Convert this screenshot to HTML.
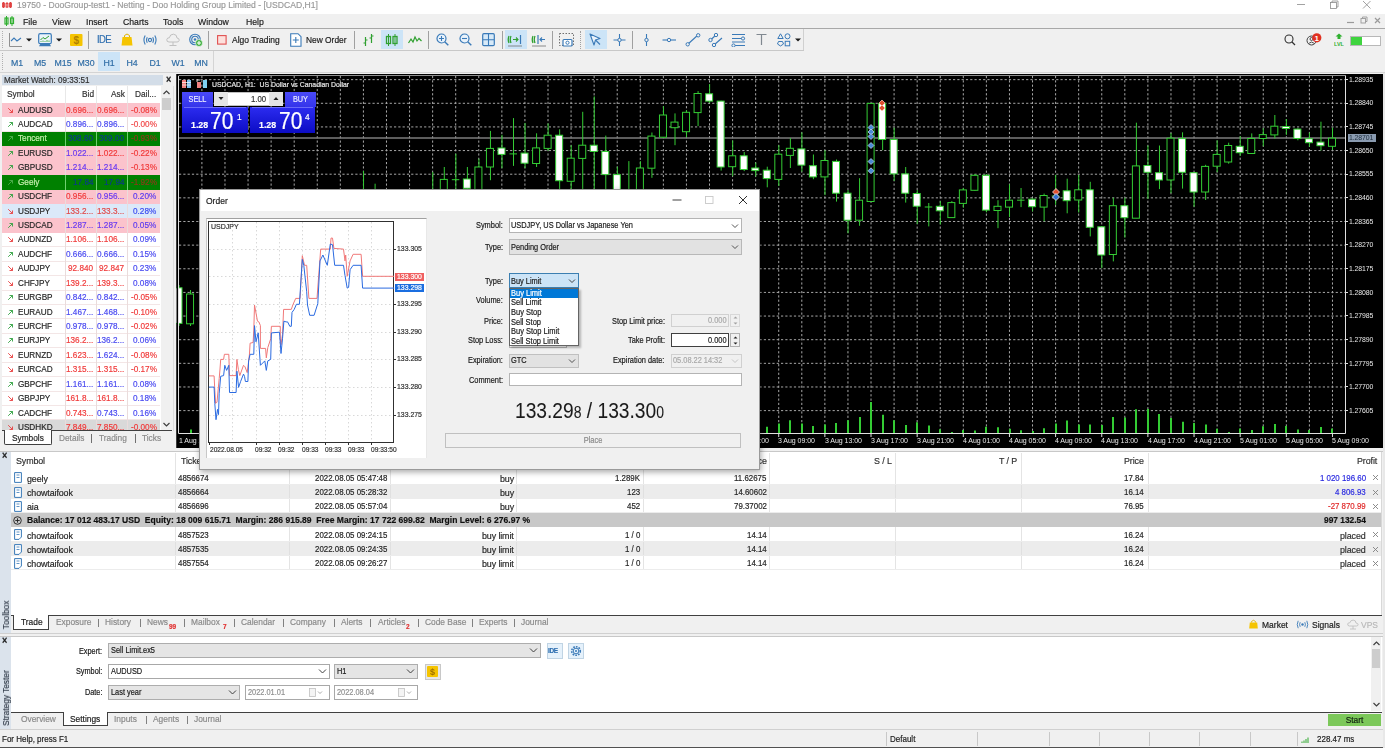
<!DOCTYPE html>
<html><head><meta charset="utf-8"><style>
*{margin:0;padding:0}
html,body{width:1385px;height:748px;overflow:hidden;background:#f0f0f0;position:relative}
body{font-family:"Liberation Sans",sans-serif}
.t8{position:absolute;white-space:nowrap;font-size:8px;-webkit-text-stroke:0.17px currentColor;transform:scaleY(1.12);will-change:transform}
.r{text-align:right}
.mw{font-size:8.2px;line-height:11px}
.tb{font-size:7.9px;line-height:11px}
.tbl{font-size:8.9px;line-height:11px;letter-spacing:-0.1px}
.pl{position:absolute;will-change:transform;left:1349px;font-size:6.9px;letter-spacing:-0.1px;line-height:10px;color:#e8e8e8;white-space:nowrap}
.tl{position:absolute;will-change:transform;top:435.5px;font-size:7px;letter-spacing:-0.05px;line-height:10px;color:#e8e8e8;white-space:nowrap}
.ar{position:absolute;left:0;top:0}
</style></head><body>
<div style="position:absolute;left:0;top:0;width:1385px;height:14px;background:#fff"></div>
<svg style="position:absolute;left:2px;top:1px" width="11" height="8" viewBox="0 0 11 8"><path d="M1.5 1V7M5 1V7M8.5 1V7" stroke="#e04040" stroke-width="1"/><rect x="0.5" y="2" width="2" height="4" fill="none" stroke="#e04040" stroke-width="0.9"/><rect x="4" y="2.5" width="2" height="3.5" fill="none" stroke="#e04040" stroke-width="0.9"/><rect x="7.5" y="2" width="2" height="4" fill="none" stroke="#e04040" stroke-width="0.9"/></svg>
<div class="t8" style="left:17px;top:-0.5px;line-height:11px;font-size:8.6px;color:#9a9a9a">19750 - DooGroup-test1 - Netting - Doo Holding Group Limited - [USDCAD,H1]</div>
<svg style="position:absolute;left:1296px;top:0px" width="10" height="8" viewBox="0 0 10 8"><path d="M1 4.5H9" stroke="#8a8a8a" stroke-width="0.8"/></svg>
<svg style="position:absolute;left:1329px;top:0px" width="10" height="9" viewBox="0 0 10 9"><rect x="1.5" y="2.5" width="6" height="6" fill="none" stroke="#8a8a8a" stroke-width="0.8"/><path d="M3 2.5V1H9V7H7.5" stroke="#8a8a8a" stroke-width="0.8" fill="none"/></svg>
<svg style="position:absolute;left:1362px;top:0px" width="10" height="9" viewBox="0 0 10 9"><path d="M1 1L8.5 8.5M8.5 1L1 8.5" stroke="#8a8a8a" stroke-width="0.8"/></svg>
<div style="position:absolute;left:0;top:14px;width:1385px;height:14px;background:#f0f0f0"></div>
<div style="position:absolute;left:0;top:28px;width:1385px;height:1px;background:#a8a8a8"></div>
<svg style="position:absolute;left:4px;top:15px" width="11" height="12" viewBox="0 0 11 12"><path d="M2.5 1V11M8 1V11" stroke="#30b030" stroke-width="1"/><rect x="1" y="3" width="3" height="6" fill="none" stroke="#30b030" stroke-width="1.2"/><rect x="6.5" y="3" width="3" height="5.5" fill="none" stroke="#30b030" stroke-width="1.2"/></svg>
<div class="t8" style="left:23px;top:15.6px;line-height:12px;font-size:8.7px;color:#1a1a1a">File</div>
<div class="t8" style="left:52px;top:15.6px;line-height:12px;font-size:8.7px;color:#1a1a1a">View</div>
<div class="t8" style="left:85.8px;top:15.6px;line-height:12px;font-size:8.7px;color:#1a1a1a">Insert</div>
<div class="t8" style="left:122.7px;top:15.6px;line-height:12px;font-size:8.7px;color:#1a1a1a">Charts</div>
<div class="t8" style="left:163.2px;top:15.6px;line-height:12px;font-size:8.7px;color:#1a1a1a">Tools</div>
<div class="t8" style="left:198.2px;top:15.6px;line-height:12px;font-size:8.7px;color:#1a1a1a">Window</div>
<div class="t8" style="left:245.9px;top:15.6px;line-height:12px;font-size:8.7px;color:#1a1a1a">Help</div>
<svg style="position:absolute;left:1346px;top:17px" width="9" height="7" viewBox="0 0 9 7"><path d="M1 5.5H8" stroke="#9a9a9a" stroke-width="1.2"/></svg>
<svg style="position:absolute;left:1360px;top:16px" width="8" height="8" viewBox="0 0 8 8"><rect x="1" y="2.5" width="4.5" height="4.5" fill="none" stroke="#9a9a9a" stroke-width="0.9"/><path d="M2.5 2.5V1H7V5.5H5.5" stroke="#9a9a9a" stroke-width="0.9" fill="none"/></svg>
<svg style="position:absolute;left:1374px;top:17px" width="7" height="7" viewBox="0 0 7 7"><path d="M1 1L6 6M6 1L1 6" stroke="#9a9a9a" stroke-width="1.2"/></svg>
<div style="position:absolute;left:0;top:29px;width:1385px;height:21px;background:#f0f0f0"></div>
<div style="position:absolute;left:0;top:50px;width:804px;height:1px;background:#c8c8c8"></div>
<div style="position:absolute;left:803px;top:29px;width:1px;height:21px;background:#d0d0d0"></div>
<div style="position:absolute;left:2px;top:31px;width:1px;height:17px;border-left:1px dotted #b0b0b0"></div>
<svg style="position:absolute;left:9px;top:33px" width="14" height="14" viewBox="0 0 14 14"><path d="M0.5 0V13.5H13" stroke="#909090" stroke-width="1" fill="none"/><path d="M2 8L5 5L8 8L12 5" stroke="#3a7ab8" stroke-width="1.1" fill="none"/></svg>
<svg style="position:absolute;left:26px;top:38px" width="6" height="4" viewBox="0 0 6 4"><path d="M0 0.5H6L3 3.5Z" fill="#1a1a1a"/></svg>
<svg style="position:absolute;left:38px;top:33px" width="14" height="14" viewBox="0 0 14 14"><rect x="0.7" y="0.7" width="12.6" height="10" rx="1.5" fill="#eaf3fb" stroke="#3a7ab8" stroke-width="1.2"/><path d="M2.5 10.5L1 13.3H13L11.5 10.5" fill="#3a7ab8"/><path d="M2.5 7L5 4.5L7 6L11 3" stroke="#30a030" stroke-width="1" fill="none"/><path d="M3 9V8M5 9V7.5M7 9V8M9 9V7M11 9V7.5" stroke="#30a030" stroke-width="0.8"/></svg>
<svg style="position:absolute;left:56px;top:38px" width="6" height="4" viewBox="0 0 6 4"><path d="M0 0.5H6L3 3.5Z" fill="#1a1a1a"/></svg>
<svg style="position:absolute;left:70px;top:34px" width="13" height="12" viewBox="0 0 13 12"><rect x="0" y="0" width="12.5" height="12" rx="1" fill="#f5c400"/><text x="6.2" y="9.6" font-family="Liberation Sans" font-size="10" font-weight="bold" fill="#b08000" text-anchor="middle">$</text></svg>
<div style="position:absolute;left:88px;top:31px;width:1px;height:18px;background:#a0a0a0"></div>
<div class="t8" style="left:96.5px;top:33px;line-height:14px;font-size:9.5px;color:#2f6fb0;letter-spacing:-0.6px">IDE</div>
<svg style="position:absolute;left:121px;top:33px" width="12" height="13" viewBox="0 0 12 13"><path d="M3.5 4V2.5Q6 -0.5 8.5 2.5V4" stroke="#e0b000" stroke-width="1" fill="none"/><path d="M1.5 4H10.5L11.5 12.5H0.5Z" fill="#f5c400"/></svg>
<svg style="position:absolute;left:143px;top:34px" width="14" height="12" viewBox="0 0 14 12"><circle cx="7" cy="6" r="1.6" fill="none" stroke="#3a7ab8" stroke-width="1.1"/><path d="M4.3 3.3Q2.8 6 4.3 8.7M9.7 3.3Q11.2 6 9.7 8.7M2.2 1.5Q-0.3 6 2.2 10.5M11.8 1.5Q14.3 6 11.8 10.5" stroke="#3a7ab8" stroke-width="1.1" fill="none"/></svg>
<svg style="position:absolute;left:166px;top:33px" width="14" height="13" viewBox="0 0 14 13"><path d="M3 9Q0.5 9 0.8 6.5Q1.3 4.5 3.3 4.8Q4 1 7.5 1.2Q11 1.5 11 5Q13.5 5.3 13.2 7.3Q13 9 11 9Z" fill="none" stroke="#c0c0c0" stroke-width="1"/><path d="M7 9V12.5M3.5 12.5H10.5" stroke="#c0c0c0" stroke-width="1"/></svg>
<svg style="position:absolute;left:189px;top:33px" width="14" height="14" viewBox="0 0 14 14"><circle cx="6" cy="6.5" r="5.3" fill="none" stroke="#3a7ab8" stroke-width="1.1"/><circle cx="6" cy="6.5" r="3.3" fill="none" stroke="#3a7ab8" stroke-width="1.1"/><circle cx="6" cy="6.5" r="1.3" fill="#3a7ab8"/><circle cx="10" cy="10" r="3.5" fill="#40b040" stroke="#fff" stroke-width="0.6"/><path d="M10 8V12M8 10H12" stroke="#fff" stroke-width="1.1"/></svg>
<div style="position:absolute;left:208px;top:31px;width:1px;height:18px;background:#a0a0a0"></div>
<svg style="position:absolute;left:217px;top:35px" width="10" height="10" viewBox="0 0 10 10"><rect x="0.6" y="0.6" width="8.5" height="8.5" fill="#fde0dc" stroke="#e05050" stroke-width="1.1"/></svg>
<div class="t8" style="left:231.5px;top:33px;line-height:14px;font-size:8.5px;color:#202020">Algo Trading</div>
<svg style="position:absolute;left:290px;top:33px" width="12" height="14" viewBox="0 0 12 14"><path d="M0.7 0.7H8L11 3.7V13.3H0.7Z" fill="#fff" stroke="#3a7ab8" stroke-width="1.1"/><path d="M5.8 4V10M2.8 7H8.8" stroke="#3a7ab8" stroke-width="1.1"/></svg>
<div class="t8" style="left:306px;top:33px;line-height:14px;font-size:8.4px;color:#202020">New Order</div>
<div style="position:absolute;left:354px;top:31px;width:1px;height:18px;background:#a0a0a0"></div>
<svg style="position:absolute;left:362px;top:33px" width="13" height="14" viewBox="0 0 13 14"><path d="M3.5 4V13M9.5 1V10M1.5 10H3.5M3.5 7H5.5M7.5 5H9.5M9.5 3H11.5" stroke="#30a030" stroke-width="1.2" fill="none"/></svg>
<div style="position:absolute;left:381px;top:30px;width:22px;height:19px;background:#cce4f7"></div>
<svg style="position:absolute;left:385px;top:33px" width="14" height="14" viewBox="0 0 14 14"><path d="M3.5 1V13M10 1V13" stroke="#30a030" stroke-width="1"/><rect x="1.5" y="3.5" width="4" height="7" fill="none" stroke="#30a030" stroke-width="1.3"/><rect x="8" y="3.5" width="4" height="7" fill="none" stroke="#30a030" stroke-width="1.3"/></svg>
<svg style="position:absolute;left:408px;top:35px" width="14" height="10" viewBox="0 0 14 10"><path d="M0.5 8L3 4L5 7L7 2L9 6L11 3.5L13.5 6" stroke="#30a030" stroke-width="1.2" fill="none"/></svg>
<div style="position:absolute;left:428px;top:31px;width:1px;height:18px;background:#a0a0a0"></div>
<svg style="position:absolute;left:436px;top:33px" width="13" height="14" viewBox="0 0 13 14"><circle cx="5.5" cy="5.5" r="4.5" fill="#eaf3fb" stroke="#3a7ab8" stroke-width="1.2"/><path d="M8.7 8.7L12.3 12.3" stroke="#3a7ab8" stroke-width="1.4"/><path d="M5.5 3V8M3 5.5H8" stroke="#3a7ab8" stroke-width="1.1"/></svg>
<svg style="position:absolute;left:459px;top:33px" width="13" height="14" viewBox="0 0 13 14"><circle cx="5.5" cy="5.5" r="4.5" fill="#eaf3fb" stroke="#3a7ab8" stroke-width="1.2"/><path d="M8.7 8.7L12.3 12.3" stroke="#3a7ab8" stroke-width="1.4"/><path d="M3 5.5H8" stroke="#3a7ab8" stroke-width="1.1"/></svg>
<svg style="position:absolute;left:482px;top:33px" width="13" height="14" viewBox="0 0 13 14"><rect x="0.7" y="0.7" width="11.6" height="12" rx="1.2" fill="#d8eaf8" stroke="#3a7ab8" stroke-width="1.2"/><path d="M6.5 1V13M1 6.8H12" stroke="#3a7ab8" stroke-width="1.1"/></svg>
<div style="position:absolute;left:502px;top:31px;width:1px;height:18px;background:#a0a0a0"></div>
<div style="position:absolute;left:505px;top:30px;width:22px;height:19px;background:#cce4f7"></div>
<svg style="position:absolute;left:507px;top:33px" width="17" height="14" viewBox="0 0 17 14"><path d="M2 3Q0.5 6.5 2 10M4 3Q2.5 6.5 4 10" stroke="#30a030" stroke-width="1.3" fill="none"/><path d="M6 6.5H11M9 4.5L11 6.5L9 8.5" stroke="#30a030" stroke-width="1.1" fill="none"/><path d="M13.5 2V11" stroke="#3a7ab8" stroke-width="1.2"/><path d="M1 13H15" stroke="#707070" stroke-width="0.8"/></svg>
<svg style="position:absolute;left:531px;top:33px" width="16" height="14" viewBox="0 0 16 14"><path d="M2 3Q0.5 6.5 2 10M4 3Q2.5 6.5 4 10" stroke="#30a030" stroke-width="1.3" fill="none"/><path d="M7 2V11" stroke="#3a7ab8" stroke-width="1.2"/><path d="M9 6.5H14M11 4.5L9 6.5L11 8.5" stroke="#3a7ab8" stroke-width="1.1" fill="none"/><path d="M1 13H15" stroke="#707070" stroke-width="0.8"/></svg>
<div style="position:absolute;left:552px;top:31px;width:1px;height:18px;background:#a0a0a0"></div>
<svg style="position:absolute;left:559px;top:33px" width="16" height="14" viewBox="0 0 16 14"><rect x="0.5" y="0.5" width="14" height="12" fill="none" stroke="#606060" stroke-width="0.9" stroke-dasharray="1.5 1.5"/><rect x="4" y="6.5" width="9" height="6.5" rx="1" fill="#fff" stroke="#3a7ab8" stroke-width="1.2"/><circle cx="8.5" cy="9.7" r="1.6" fill="none" stroke="#3a7ab8" stroke-width="1"/></svg>
<div style="position:absolute;left:580px;top:31px;width:1px;height:18px;border-left:1px dotted #a0a0a0"></div>
<div style="position:absolute;left:585px;top:30px;width:22px;height:19px;background:#cce4f7"></div>
<svg style="position:absolute;left:589px;top:33px" width="13" height="14" viewBox="0 0 13 14"><path d="M1 1L11 5.5L6.5 7L5 12Z" fill="#eaf3fb" stroke="#3a7ab8" stroke-width="1.1" stroke-linejoin="round"/><path d="M6.5 7L11 11.5" stroke="#3a7ab8" stroke-width="1.1"/></svg>
<svg style="position:absolute;left:613px;top:33px" width="13" height="14" viewBox="0 0 13 14"><path d="M6.5 1V13M0.5 7H12.5" stroke="#3a7ab8" stroke-width="1.1"/><circle cx="6.5" cy="7" r="1.7" fill="#f0f0f0" stroke="#3a7ab8" stroke-width="1"/></svg>
<div style="position:absolute;left:632px;top:31px;width:1px;height:18px;background:#a0a0a0"></div>
<svg style="position:absolute;left:642px;top:33px" width="9" height="14" viewBox="0 0 9 14"><path d="M4.5 1V13" stroke="#3a7ab8" stroke-width="1.1"/><circle cx="4.5" cy="7" r="1.7" fill="#f0f0f0" stroke="#3a7ab8" stroke-width="1"/></svg>
<svg style="position:absolute;left:662px;top:35px" width="15" height="10" viewBox="0 0 15 10"><path d="M0.5 5H14" stroke="#3a7ab8" stroke-width="1.1"/><circle cx="7" cy="5" r="1.7" fill="#f0f0f0" stroke="#3a7ab8" stroke-width="1"/></svg>
<svg style="position:absolute;left:685px;top:33px" width="16" height="14" viewBox="0 0 16 14"><path d="M3 11L13 2" stroke="#3a7ab8" stroke-width="1.1"/><circle cx="2.7" cy="11.3" r="1.7" fill="#f0f0f0" stroke="#3a7ab8" stroke-width="1"/><circle cx="13.2" cy="2.3" r="1.7" fill="#f0f0f0" stroke="#3a7ab8" stroke-width="1"/></svg>
<svg style="position:absolute;left:708px;top:33px" width="15" height="14" viewBox="0 0 15 14"><path d="M2.5 7L8 2M6 12L14 5" stroke="#3a7ab8" stroke-width="1.1"/><circle cx="2.5" cy="7" r="1.7" fill="#f0f0f0" stroke="#3a7ab8" stroke-width="1"/><circle cx="8" cy="2" r="1.7" fill="#f0f0f0" stroke="#3a7ab8" stroke-width="1"/><circle cx="6" cy="12" r="1.7" fill="#f0f0f0" stroke="#3a7ab8" stroke-width="1"/></svg>
<svg style="position:absolute;left:731px;top:33px" width="15" height="14" viewBox="0 0 15 14"><path d="M1 1.5H14M1 5.5H14M3 12.5H14M1 9H14" stroke="#3a7ab8" stroke-width="1.1"/><circle cx="12" cy="5.5" r="1.6" fill="#f0f0f0" stroke="#3a7ab8" stroke-width="1"/><circle cx="2.5" cy="12.5" r="1.6" fill="#f0f0f0" stroke="#3a7ab8" stroke-width="1"/></svg>
<svg style="position:absolute;left:756px;top:33px" width="11" height="14" viewBox="0 0 11 14"><path d="M0.5 1.5H10.5M5.5 1.5V12" stroke="#808890" stroke-width="1.2"/></svg>
<svg style="position:absolute;left:777px;top:33px" width="14" height="14" viewBox="0 0 14 14"><path d="M3.5 0.8L6.2 5.5H0.8Z" fill="none" stroke="#3a7ab8" stroke-width="1"/><circle cx="10.5" cy="3.3" r="2.5" fill="none" stroke="#3a7ab8" stroke-width="1"/><path d="M1.5 8.5H5.5L6.5 11L3.5 13L0.5 11Z" fill="none" stroke="#3a7ab8" stroke-width="1"/><rect x="8.2" y="8.3" width="4.5" height="4.5" fill="none" stroke="#3a7ab8" stroke-width="1"/></svg>
<svg style="position:absolute;left:795px;top:38px" width="6" height="4" viewBox="0 0 6 4"><path d="M0 0.5H6L3 3.5Z" fill="#1a1a1a"/></svg>
<svg style="position:absolute;left:1284px;top:34px" width="12" height="12" viewBox="0 0 12 12"><circle cx="5" cy="5" r="4" fill="none" stroke="#303030" stroke-width="1.1"/><path d="M8 8L11 11" stroke="#303030" stroke-width="1.3"/></svg>
<svg style="position:absolute;left:1306px;top:33px" width="16" height="13" viewBox="0 0 16 13"><circle cx="5.5" cy="7.5" r="4.5" fill="none" stroke="#404040" stroke-width="1"/><circle cx="5.5" cy="6" r="1.5" fill="none" stroke="#404040" stroke-width="0.9"/><path d="M2.5 10.5Q5.5 7.5 8.5 10.5" stroke="#404040" stroke-width="0.9" fill="none"/><circle cx="10.8" cy="4.8" r="4.6" fill="#e03020"/><text x="10.8" y="8.3" font-family="Liberation Sans" font-size="8" font-weight="bold" fill="#fff" text-anchor="middle">1</text></svg>
<svg style="position:absolute;left:1334px;top:33px" width="10" height="13" viewBox="0 0 10 13"><path d="M5 0.5L8.5 3.5H6.5V6H3.5V3.5H1.5Z" fill="#30b030"/><text x="5" y="12.5" font-family="Liberation Sans" font-size="5.5" font-weight="bold" fill="#30b030" text-anchor="middle">LVL</text></svg>
<div style="position:absolute;left:1350px;top:36px;width:29px;height:8px;border:1px solid #b8b8b8;background:#fff"></div>
<div style="position:absolute;left:1351px;top:37px;width:11px;height:8px;background:#3fd43f"></div>
<div style="position:absolute;left:0;top:51px;width:1385px;height:21px;background:#f0f0f0"></div>
<div style="position:absolute;left:2px;top:53px;width:1px;height:17px;border-left:1px dotted #b0b0b0"></div>
<div style="position:absolute;left:213px;top:51px;width:1px;height:21px;background:#d4d4d4"></div>
<div style="position:absolute;left:0;top:72px;width:1385px;height:1px;background:#d4d4d4"></div>
<div style="position:absolute;left:98px;top:52px;width:22px;height:19px;background:#cce4f7;border:0px"></div>
<div class="t8" style="left:4.5px;width:24px;text-align:center;top:56.5px;line-height:13px;font-size:8.8px;color:#2e6ca5">M1</div>
<div class="t8" style="left:28px;width:24px;text-align:center;top:56.5px;line-height:13px;font-size:8.8px;color:#2e6ca5">M5</div>
<div class="t8" style="left:51px;width:24px;text-align:center;top:56.5px;line-height:13px;font-size:8.8px;color:#2e6ca5">M15</div>
<div class="t8" style="left:74.3px;width:24px;text-align:center;top:56.5px;line-height:13px;font-size:8.8px;color:#2e6ca5">M30</div>
<div class="t8" style="left:97.3px;width:24px;text-align:center;top:56.5px;line-height:13px;font-size:8.8px;color:#2e6ca5">H1</div>
<div class="t8" style="left:120.30000000000001px;width:24px;text-align:center;top:56.5px;line-height:13px;font-size:8.8px;color:#2e6ca5">H4</div>
<div class="t8" style="left:143.3px;width:24px;text-align:center;top:56.5px;line-height:13px;font-size:8.8px;color:#2e6ca5">D1</div>
<div class="t8" style="left:166.3px;width:24px;text-align:center;top:56.5px;line-height:13px;font-size:8.8px;color:#2e6ca5">W1</div>
<div class="t8" style="left:189.3px;width:24px;text-align:center;top:56.5px;line-height:13px;font-size:8.8px;color:#2e6ca5">MN</div>
<div style="position:absolute;left:0;top:73px;width:175px;height:376px;background:#f0f0f0"></div>
<div style="position:absolute;left:2px;top:75px;width:161px;height:10px;background:#d3dde8"></div>
<div class="t8" style="left:4px;top:75px;line-height:12px;color:#303030;font-size:8.1px">Market Watch: 09:33:51</div>
<div class="t8" style="left:166px;top:74px;line-height:12px;font-size:9px;font-weight:bold;color:#202020">×</div>
<div style="position:absolute;left:2px;top:86px;width:159px;height:345px;background:#fff"></div>
<div class="t8" style="left:7px;top:89px;line-height:11px;color:#303030;font-size:8.3px">Symbol</div>
<div class="t8 r" style="right:calc(1385px - 93.5px);top:89px;line-height:11px;color:#303030;font-size:8.3px">Bid</div>
<div class="t8 r" style="right:calc(1385px - 124.5px);top:89px;line-height:11px;color:#303030;font-size:8.3px">Ask</div>
<div class="t8 r" style="right:calc(1385px - 156.5px);top:89px;line-height:11px;color:#303030;font-size:8.3px">Dail...</div>
<div style="position:absolute;left:65px;top:86px;width:1px;height:17px;background:#e8e8e8"></div>
<div style="position:absolute;left:96px;top:86px;width:1px;height:17px;background:#e8e8e8"></div>
<div style="position:absolute;left:127px;top:86px;width:1px;height:17px;background:#e8e8e8"></div>
<div style="position:absolute;left:2px;top:103.00px;width:158px;height:14.43px;background:#fbc3cc"></div>
<div style="position:absolute;left:65px;top:103.00px;width:1px;height:14.43px;background:#eadcdc"></div>
<div style="position:absolute;left:96px;top:103.00px;width:1px;height:14.43px;background:#eadcdc"></div>
<div style="position:absolute;left:127px;top:103.00px;width:1px;height:14.43px;background:#eadcdc"></div>
<div style="position:absolute;left:7px;top:106.50px"><svg class="ar" width="7" height="7" viewBox="0 0 7 7"><path d="M1.2 1.2L5.5 5.5M2.5 5.5H5.5V2.5" stroke="#e84040" stroke-width="0.9" fill="none"/></svg></div>
<div class="t8 mw" style="left:18px;top:104.60px;color:#262626">AUDUSD</div>
<div class="t8 mw r" style="right:calc(1385px - 93.5px);top:104.60px;color:#f03a3a">0.696...</div>
<div class="t8 mw r" style="right:calc(1385px - 124.5px);top:104.60px;color:#f03a3a">0.696...</div>
<div class="t8 mw r" style="right:calc(1385px - 156.5px);top:104.60px;color:#f03a3a">-0.08%</div>
<div style="position:absolute;left:2px;top:117.43px;width:158px;height:14.43px;background:#ffffff"></div>
<div style="position:absolute;left:2px;top:130.86px;width:158px;height:1px;background:#f3e6e6"></div>
<div style="position:absolute;left:65px;top:117.43px;width:1px;height:14.43px;background:#eadcdc"></div>
<div style="position:absolute;left:96px;top:117.43px;width:1px;height:14.43px;background:#eadcdc"></div>
<div style="position:absolute;left:127px;top:117.43px;width:1px;height:14.43px;background:#eadcdc"></div>
<div style="position:absolute;left:7px;top:120.93px"><svg class="ar" width="7" height="7" viewBox="0 0 7 7"><path d="M1.2 5.8L5.5 1.5M2.5 1.5H5.5V4.5" stroke="#30a040" stroke-width="0.9" fill="none"/></svg></div>
<div class="t8 mw" style="left:18px;top:119.03px;color:#262626">AUDCAD</div>
<div class="t8 mw r" style="right:calc(1385px - 93.5px);top:119.03px;color:#4a4af0">0.896...</div>
<div class="t8 mw r" style="right:calc(1385px - 124.5px);top:119.03px;color:#4a4af0">0.896...</div>
<div class="t8 mw r" style="right:calc(1385px - 156.5px);top:119.03px;color:#f04848">-0.00%</div>
<div style="position:absolute;left:2px;top:131.86px;width:158px;height:14.43px;background:#008000"></div>
<div style="position:absolute;left:65px;top:131.86px;width:1px;height:14.43px;background:#70d070"></div>
<div style="position:absolute;left:96px;top:131.86px;width:1px;height:14.43px;background:#70d070"></div>
<div style="position:absolute;left:127px;top:131.86px;width:1px;height:14.43px;background:#70d070"></div>
<div style="position:absolute;left:7px;top:135.36px"><svg class="ar" width="7" height="7" viewBox="0 0 7 7"><path d="M1.2 5.8L5.5 1.5M2.5 1.5H5.5V4.5" stroke="#50b050" stroke-width="0.9" fill="none"/></svg></div>
<div class="t8 mw" style="left:18px;top:133.46px;color:#c8f0b0">Tencent</div>
<div class="t8 mw r" style="right:calc(1385px - 93.5px);top:133.46px;color:#0a3a8a">308.60</div>
<div class="t8 mw r" style="right:calc(1385px - 124.5px);top:133.46px;color:#0a3a8a">309.00</div>
<div class="t8 mw r" style="right:calc(1385px - 156.5px);top:133.46px;color:#8a3a1a">-0.93%</div>
<div style="position:absolute;left:2px;top:146.29px;width:158px;height:14.43px;background:#fbc3cc"></div>
<div style="position:absolute;left:65px;top:146.29px;width:1px;height:14.43px;background:#eadcdc"></div>
<div style="position:absolute;left:96px;top:146.29px;width:1px;height:14.43px;background:#eadcdc"></div>
<div style="position:absolute;left:127px;top:146.29px;width:1px;height:14.43px;background:#eadcdc"></div>
<div style="position:absolute;left:7px;top:149.79px"><svg class="ar" width="7" height="7" viewBox="0 0 7 7"><path d="M1.2 5.8L5.5 1.5M2.5 1.5H5.5V4.5" stroke="#30a040" stroke-width="0.9" fill="none"/></svg></div>
<div class="t8 mw" style="left:18px;top:147.89px;color:#262626">EURUSD</div>
<div class="t8 mw r" style="right:calc(1385px - 93.5px);top:147.89px;color:#6a3af0">1.022...</div>
<div class="t8 mw r" style="right:calc(1385px - 124.5px);top:147.89px;color:#f03a3a">1.022...</div>
<div class="t8 mw r" style="right:calc(1385px - 156.5px);top:147.89px;color:#f03a3a">-0.22%</div>
<div style="position:absolute;left:2px;top:160.72px;width:158px;height:14.43px;background:#fbc3cc"></div>
<div style="position:absolute;left:65px;top:160.72px;width:1px;height:14.43px;background:#eadcdc"></div>
<div style="position:absolute;left:96px;top:160.72px;width:1px;height:14.43px;background:#eadcdc"></div>
<div style="position:absolute;left:127px;top:160.72px;width:1px;height:14.43px;background:#eadcdc"></div>
<div style="position:absolute;left:7px;top:164.22px"><svg class="ar" width="7" height="7" viewBox="0 0 7 7"><path d="M1.2 5.8L5.5 1.5M2.5 1.5H5.5V4.5" stroke="#30a040" stroke-width="0.9" fill="none"/></svg></div>
<div class="t8 mw" style="left:18px;top:162.32px;color:#262626">GBPUSD</div>
<div class="t8 mw r" style="right:calc(1385px - 93.5px);top:162.32px;color:#6a3af0">1.214...</div>
<div class="t8 mw r" style="right:calc(1385px - 124.5px);top:162.32px;color:#6a3af0">1.214...</div>
<div class="t8 mw r" style="right:calc(1385px - 156.5px);top:162.32px;color:#f03a3a">-0.13%</div>
<div style="position:absolute;left:2px;top:175.15px;width:158px;height:14.43px;background:#008000"></div>
<div style="position:absolute;left:65px;top:175.15px;width:1px;height:14.43px;background:#70d070"></div>
<div style="position:absolute;left:96px;top:175.15px;width:1px;height:14.43px;background:#70d070"></div>
<div style="position:absolute;left:127px;top:175.15px;width:1px;height:14.43px;background:#70d070"></div>
<div style="position:absolute;left:7px;top:178.65px"><svg class="ar" width="7" height="7" viewBox="0 0 7 7"><path d="M1.2 5.8L5.5 1.5M2.5 1.5H5.5V4.5" stroke="#50b050" stroke-width="0.9" fill="none"/></svg></div>
<div class="t8 mw" style="left:18px;top:176.75px;color:#c8f0b0">Geely</div>
<div class="t8 mw r" style="right:calc(1385px - 93.5px);top:176.75px;color:#0a3a8a">17.84</div>
<div class="t8 mw r" style="right:calc(1385px - 124.5px);top:176.75px;color:#0a3a8a">17.94</div>
<div class="t8 mw r" style="right:calc(1385px - 156.5px);top:176.75px;color:#8a3a1a">-1.92%</div>
<div style="position:absolute;left:2px;top:189.58px;width:158px;height:14.43px;background:#fbc3cc"></div>
<div style="position:absolute;left:65px;top:189.58px;width:1px;height:14.43px;background:#eadcdc"></div>
<div style="position:absolute;left:96px;top:189.58px;width:1px;height:14.43px;background:#eadcdc"></div>
<div style="position:absolute;left:127px;top:189.58px;width:1px;height:14.43px;background:#eadcdc"></div>
<div style="position:absolute;left:7px;top:193.08px"><svg class="ar" width="7" height="7" viewBox="0 0 7 7"><path d="M1.2 5.8L5.5 1.5M2.5 1.5H5.5V4.5" stroke="#30a040" stroke-width="0.9" fill="none"/></svg></div>
<div class="t8 mw" style="left:18px;top:191.18px;color:#262626">USDCHF</div>
<div class="t8 mw r" style="right:calc(1385px - 93.5px);top:191.18px;color:#f03a3a">0.956...</div>
<div class="t8 mw r" style="right:calc(1385px - 124.5px);top:191.18px;color:#6a3af0">0.956...</div>
<div class="t8 mw r" style="right:calc(1385px - 156.5px);top:191.18px;color:#5a3af0">0.20%</div>
<div style="position:absolute;left:2px;top:204.01px;width:158px;height:14.43px;background:#dbe9f9"></div>
<div style="position:absolute;left:65px;top:204.01px;width:1px;height:14.43px;background:#eadcdc"></div>
<div style="position:absolute;left:96px;top:204.01px;width:1px;height:14.43px;background:#eadcdc"></div>
<div style="position:absolute;left:127px;top:204.01px;width:1px;height:14.43px;background:#eadcdc"></div>
<div style="position:absolute;left:7px;top:207.51px"><svg class="ar" width="7" height="7" viewBox="0 0 7 7"><path d="M1.2 1.2L5.5 5.5M2.5 5.5H5.5V2.5" stroke="#e84040" stroke-width="0.9" fill="none"/></svg></div>
<div class="t8 mw" style="left:18px;top:205.61px;color:#262626">USDJPY</div>
<div class="t8 mw r" style="right:calc(1385px - 93.5px);top:205.61px;color:#e04848">133.2...</div>
<div class="t8 mw r" style="right:calc(1385px - 124.5px);top:205.61px;color:#e04848">133.3...</div>
<div class="t8 mw r" style="right:calc(1385px - 156.5px);top:205.61px;color:#3a4af0">0.28%</div>
<div style="position:absolute;left:2px;top:218.44px;width:158px;height:14.43px;background:#fbc3cc"></div>
<div style="position:absolute;left:65px;top:218.44px;width:1px;height:14.43px;background:#eadcdc"></div>
<div style="position:absolute;left:96px;top:218.44px;width:1px;height:14.43px;background:#eadcdc"></div>
<div style="position:absolute;left:127px;top:218.44px;width:1px;height:14.43px;background:#eadcdc"></div>
<div style="position:absolute;left:7px;top:221.94px"><svg class="ar" width="7" height="7" viewBox="0 0 7 7"><path d="M1.2 5.8L5.5 1.5M2.5 1.5H5.5V4.5" stroke="#30a040" stroke-width="0.9" fill="none"/></svg></div>
<div class="t8 mw" style="left:18px;top:220.04px;color:#262626">USDCAD</div>
<div class="t8 mw r" style="right:calc(1385px - 93.5px);top:220.04px;color:#6a3af0">1.287...</div>
<div class="t8 mw r" style="right:calc(1385px - 124.5px);top:220.04px;color:#6a3af0">1.287...</div>
<div class="t8 mw r" style="right:calc(1385px - 156.5px);top:220.04px;color:#5a3af0">0.05%</div>
<div style="position:absolute;left:2px;top:232.87px;width:158px;height:14.43px;background:#ffffff"></div>
<div style="position:absolute;left:2px;top:246.30px;width:158px;height:1px;background:#f3e6e6"></div>
<div style="position:absolute;left:65px;top:232.87px;width:1px;height:14.43px;background:#eadcdc"></div>
<div style="position:absolute;left:96px;top:232.87px;width:1px;height:14.43px;background:#eadcdc"></div>
<div style="position:absolute;left:127px;top:232.87px;width:1px;height:14.43px;background:#eadcdc"></div>
<div style="position:absolute;left:7px;top:236.37px"><svg class="ar" width="7" height="7" viewBox="0 0 7 7"><path d="M1.2 1.2L5.5 5.5M2.5 5.5H5.5V2.5" stroke="#e84040" stroke-width="0.9" fill="none"/></svg></div>
<div class="t8 mw" style="left:18px;top:234.47px;color:#262626">AUDNZD</div>
<div class="t8 mw r" style="right:calc(1385px - 93.5px);top:234.47px;color:#f03a3a">1.106...</div>
<div class="t8 mw r" style="right:calc(1385px - 124.5px);top:234.47px;color:#f03a3a">1.106...</div>
<div class="t8 mw r" style="right:calc(1385px - 156.5px);top:234.47px;color:#4a4af0">0.09%</div>
<div style="position:absolute;left:2px;top:247.30px;width:158px;height:14.43px;background:#ffffff"></div>
<div style="position:absolute;left:2px;top:260.73px;width:158px;height:1px;background:#f3e6e6"></div>
<div style="position:absolute;left:65px;top:247.30px;width:1px;height:14.43px;background:#eadcdc"></div>
<div style="position:absolute;left:96px;top:247.30px;width:1px;height:14.43px;background:#eadcdc"></div>
<div style="position:absolute;left:127px;top:247.30px;width:1px;height:14.43px;background:#eadcdc"></div>
<div style="position:absolute;left:7px;top:250.80px"><svg class="ar" width="7" height="7" viewBox="0 0 7 7"><path d="M1.2 5.8L5.5 1.5M2.5 1.5H5.5V4.5" stroke="#30a040" stroke-width="0.9" fill="none"/></svg></div>
<div class="t8 mw" style="left:18px;top:248.90px;color:#262626">AUDCHF</div>
<div class="t8 mw r" style="right:calc(1385px - 93.5px);top:248.90px;color:#4a4af0">0.666...</div>
<div class="t8 mw r" style="right:calc(1385px - 124.5px);top:248.90px;color:#4a4af0">0.666...</div>
<div class="t8 mw r" style="right:calc(1385px - 156.5px);top:248.90px;color:#4a4af0">0.15%</div>
<div style="position:absolute;left:2px;top:261.73px;width:158px;height:14.43px;background:#ffffff"></div>
<div style="position:absolute;left:2px;top:275.16px;width:158px;height:1px;background:#f3e6e6"></div>
<div style="position:absolute;left:65px;top:261.73px;width:1px;height:14.43px;background:#eadcdc"></div>
<div style="position:absolute;left:96px;top:261.73px;width:1px;height:14.43px;background:#eadcdc"></div>
<div style="position:absolute;left:127px;top:261.73px;width:1px;height:14.43px;background:#eadcdc"></div>
<div style="position:absolute;left:7px;top:265.23px"><svg class="ar" width="7" height="7" viewBox="0 0 7 7"><path d="M1.2 1.2L5.5 5.5M2.5 5.5H5.5V2.5" stroke="#e84040" stroke-width="0.9" fill="none"/></svg></div>
<div class="t8 mw" style="left:18px;top:263.33px;color:#262626">AUDJPY</div>
<div class="t8 mw r" style="right:calc(1385px - 93.5px);top:263.33px;color:#f03a3a">92.840</div>
<div class="t8 mw r" style="right:calc(1385px - 124.5px);top:263.33px;color:#f03a3a">92.847</div>
<div class="t8 mw r" style="right:calc(1385px - 156.5px);top:263.33px;color:#4a4af0">0.23%</div>
<div style="position:absolute;left:2px;top:276.16px;width:158px;height:14.43px;background:#ffffff"></div>
<div style="position:absolute;left:2px;top:289.59px;width:158px;height:1px;background:#f3e6e6"></div>
<div style="position:absolute;left:65px;top:276.16px;width:1px;height:14.43px;background:#eadcdc"></div>
<div style="position:absolute;left:96px;top:276.16px;width:1px;height:14.43px;background:#eadcdc"></div>
<div style="position:absolute;left:127px;top:276.16px;width:1px;height:14.43px;background:#eadcdc"></div>
<div style="position:absolute;left:7px;top:279.66px"><svg class="ar" width="7" height="7" viewBox="0 0 7 7"><path d="M1.2 1.2L5.5 5.5M2.5 5.5H5.5V2.5" stroke="#e84040" stroke-width="0.9" fill="none"/></svg></div>
<div class="t8 mw" style="left:18px;top:277.76px;color:#262626">CHFJPY</div>
<div class="t8 mw r" style="right:calc(1385px - 93.5px);top:277.76px;color:#f03a3a">139.2...</div>
<div class="t8 mw r" style="right:calc(1385px - 124.5px);top:277.76px;color:#f03a3a">139.3...</div>
<div class="t8 mw r" style="right:calc(1385px - 156.5px);top:277.76px;color:#4a4af0">0.08%</div>
<div style="position:absolute;left:2px;top:290.59px;width:158px;height:14.43px;background:#ffffff"></div>
<div style="position:absolute;left:2px;top:304.02px;width:158px;height:1px;background:#f3e6e6"></div>
<div style="position:absolute;left:65px;top:290.59px;width:1px;height:14.43px;background:#eadcdc"></div>
<div style="position:absolute;left:96px;top:290.59px;width:1px;height:14.43px;background:#eadcdc"></div>
<div style="position:absolute;left:127px;top:290.59px;width:1px;height:14.43px;background:#eadcdc"></div>
<div style="position:absolute;left:7px;top:294.09px"><svg class="ar" width="7" height="7" viewBox="0 0 7 7"><path d="M1.2 5.8L5.5 1.5M2.5 1.5H5.5V4.5" stroke="#30a040" stroke-width="0.9" fill="none"/></svg></div>
<div class="t8 mw" style="left:18px;top:292.19px;color:#262626">EURGBP</div>
<div class="t8 mw r" style="right:calc(1385px - 93.5px);top:292.19px;color:#4a4af0">0.842...</div>
<div class="t8 mw r" style="right:calc(1385px - 124.5px);top:292.19px;color:#4a4af0">0.842...</div>
<div class="t8 mw r" style="right:calc(1385px - 156.5px);top:292.19px;color:#f03a3a">-0.05%</div>
<div style="position:absolute;left:2px;top:305.02px;width:158px;height:14.43px;background:#ffffff"></div>
<div style="position:absolute;left:2px;top:318.45px;width:158px;height:1px;background:#f3e6e6"></div>
<div style="position:absolute;left:65px;top:305.02px;width:1px;height:14.43px;background:#eadcdc"></div>
<div style="position:absolute;left:96px;top:305.02px;width:1px;height:14.43px;background:#eadcdc"></div>
<div style="position:absolute;left:127px;top:305.02px;width:1px;height:14.43px;background:#eadcdc"></div>
<div style="position:absolute;left:7px;top:308.52px"><svg class="ar" width="7" height="7" viewBox="0 0 7 7"><path d="M1.2 5.8L5.5 1.5M2.5 1.5H5.5V4.5" stroke="#30a040" stroke-width="0.9" fill="none"/></svg></div>
<div class="t8 mw" style="left:18px;top:306.62px;color:#262626">EURAUD</div>
<div class="t8 mw r" style="right:calc(1385px - 93.5px);top:306.62px;color:#4a4af0">1.467...</div>
<div class="t8 mw r" style="right:calc(1385px - 124.5px);top:306.62px;color:#4a4af0">1.468...</div>
<div class="t8 mw r" style="right:calc(1385px - 156.5px);top:306.62px;color:#f03a3a">-0.10%</div>
<div style="position:absolute;left:2px;top:319.45px;width:158px;height:14.43px;background:#ffffff"></div>
<div style="position:absolute;left:2px;top:332.88px;width:158px;height:1px;background:#f3e6e6"></div>
<div style="position:absolute;left:65px;top:319.45px;width:1px;height:14.43px;background:#eadcdc"></div>
<div style="position:absolute;left:96px;top:319.45px;width:1px;height:14.43px;background:#eadcdc"></div>
<div style="position:absolute;left:127px;top:319.45px;width:1px;height:14.43px;background:#eadcdc"></div>
<div style="position:absolute;left:7px;top:322.95px"><svg class="ar" width="7" height="7" viewBox="0 0 7 7"><path d="M1.2 5.8L5.5 1.5M2.5 1.5H5.5V4.5" stroke="#30a040" stroke-width="0.9" fill="none"/></svg></div>
<div class="t8 mw" style="left:18px;top:321.05px;color:#262626">EURCHF</div>
<div class="t8 mw r" style="right:calc(1385px - 93.5px);top:321.05px;color:#4a4af0">0.978...</div>
<div class="t8 mw r" style="right:calc(1385px - 124.5px);top:321.05px;color:#4a4af0">0.978...</div>
<div class="t8 mw r" style="right:calc(1385px - 156.5px);top:321.05px;color:#f03a3a">-0.02%</div>
<div style="position:absolute;left:2px;top:333.88px;width:158px;height:14.43px;background:#ffffff"></div>
<div style="position:absolute;left:2px;top:347.31px;width:158px;height:1px;background:#f3e6e6"></div>
<div style="position:absolute;left:65px;top:333.88px;width:1px;height:14.43px;background:#eadcdc"></div>
<div style="position:absolute;left:96px;top:333.88px;width:1px;height:14.43px;background:#eadcdc"></div>
<div style="position:absolute;left:127px;top:333.88px;width:1px;height:14.43px;background:#eadcdc"></div>
<div style="position:absolute;left:7px;top:337.38px"><svg class="ar" width="7" height="7" viewBox="0 0 7 7"><path d="M1.2 5.8L5.5 1.5M2.5 1.5H5.5V4.5" stroke="#30a040" stroke-width="0.9" fill="none"/></svg></div>
<div class="t8 mw" style="left:18px;top:335.48px;color:#262626">EURJPY</div>
<div class="t8 mw r" style="right:calc(1385px - 93.5px);top:335.48px;color:#f03a3a">136.2...</div>
<div class="t8 mw r" style="right:calc(1385px - 124.5px);top:335.48px;color:#4a4af0">136.2...</div>
<div class="t8 mw r" style="right:calc(1385px - 156.5px);top:335.48px;color:#4a4af0">0.06%</div>
<div style="position:absolute;left:2px;top:348.31px;width:158px;height:14.43px;background:#ffffff"></div>
<div style="position:absolute;left:2px;top:361.74px;width:158px;height:1px;background:#f3e6e6"></div>
<div style="position:absolute;left:65px;top:348.31px;width:1px;height:14.43px;background:#eadcdc"></div>
<div style="position:absolute;left:96px;top:348.31px;width:1px;height:14.43px;background:#eadcdc"></div>
<div style="position:absolute;left:127px;top:348.31px;width:1px;height:14.43px;background:#eadcdc"></div>
<div style="position:absolute;left:7px;top:351.81px"><svg class="ar" width="7" height="7" viewBox="0 0 7 7"><path d="M1.2 1.2L5.5 5.5M2.5 5.5H5.5V2.5" stroke="#e84040" stroke-width="0.9" fill="none"/></svg></div>
<div class="t8 mw" style="left:18px;top:349.91px;color:#262626">EURNZD</div>
<div class="t8 mw r" style="right:calc(1385px - 93.5px);top:349.91px;color:#f03a3a">1.623...</div>
<div class="t8 mw r" style="right:calc(1385px - 124.5px);top:349.91px;color:#4a4af0">1.624...</div>
<div class="t8 mw r" style="right:calc(1385px - 156.5px);top:349.91px;color:#f03a3a">-0.08%</div>
<div style="position:absolute;left:2px;top:362.74px;width:158px;height:14.43px;background:#ffffff"></div>
<div style="position:absolute;left:2px;top:376.17px;width:158px;height:1px;background:#f3e6e6"></div>
<div style="position:absolute;left:65px;top:362.74px;width:1px;height:14.43px;background:#eadcdc"></div>
<div style="position:absolute;left:96px;top:362.74px;width:1px;height:14.43px;background:#eadcdc"></div>
<div style="position:absolute;left:127px;top:362.74px;width:1px;height:14.43px;background:#eadcdc"></div>
<div style="position:absolute;left:7px;top:366.24px"><svg class="ar" width="7" height="7" viewBox="0 0 7 7"><path d="M1.2 1.2L5.5 5.5M2.5 5.5H5.5V2.5" stroke="#e84040" stroke-width="0.9" fill="none"/></svg></div>
<div class="t8 mw" style="left:18px;top:364.34px;color:#262626">EURCAD</div>
<div class="t8 mw r" style="right:calc(1385px - 93.5px);top:364.34px;color:#f03a3a">1.315...</div>
<div class="t8 mw r" style="right:calc(1385px - 124.5px);top:364.34px;color:#f03a3a">1.315...</div>
<div class="t8 mw r" style="right:calc(1385px - 156.5px);top:364.34px;color:#f03a3a">-0.17%</div>
<div style="position:absolute;left:2px;top:377.17px;width:158px;height:14.43px;background:#ffffff"></div>
<div style="position:absolute;left:2px;top:390.60px;width:158px;height:1px;background:#f3e6e6"></div>
<div style="position:absolute;left:65px;top:377.17px;width:1px;height:14.43px;background:#eadcdc"></div>
<div style="position:absolute;left:96px;top:377.17px;width:1px;height:14.43px;background:#eadcdc"></div>
<div style="position:absolute;left:127px;top:377.17px;width:1px;height:14.43px;background:#eadcdc"></div>
<div style="position:absolute;left:7px;top:380.67px"><svg class="ar" width="7" height="7" viewBox="0 0 7 7"><path d="M1.2 5.8L5.5 1.5M2.5 1.5H5.5V4.5" stroke="#30a040" stroke-width="0.9" fill="none"/></svg></div>
<div class="t8 mw" style="left:18px;top:378.77px;color:#262626">GBPCHF</div>
<div class="t8 mw r" style="right:calc(1385px - 93.5px);top:378.77px;color:#4a4af0">1.161...</div>
<div class="t8 mw r" style="right:calc(1385px - 124.5px);top:378.77px;color:#4a4af0">1.161...</div>
<div class="t8 mw r" style="right:calc(1385px - 156.5px);top:378.77px;color:#4a4af0">0.08%</div>
<div style="position:absolute;left:2px;top:391.60px;width:158px;height:14.43px;background:#ffffff"></div>
<div style="position:absolute;left:2px;top:405.03px;width:158px;height:1px;background:#f3e6e6"></div>
<div style="position:absolute;left:65px;top:391.60px;width:1px;height:14.43px;background:#eadcdc"></div>
<div style="position:absolute;left:96px;top:391.60px;width:1px;height:14.43px;background:#eadcdc"></div>
<div style="position:absolute;left:127px;top:391.60px;width:1px;height:14.43px;background:#eadcdc"></div>
<div style="position:absolute;left:7px;top:395.10px"><svg class="ar" width="7" height="7" viewBox="0 0 7 7"><path d="M1.2 1.2L5.5 5.5M2.5 5.5H5.5V2.5" stroke="#e84040" stroke-width="0.9" fill="none"/></svg></div>
<div class="t8 mw" style="left:18px;top:393.20px;color:#262626">GBPJPY</div>
<div class="t8 mw r" style="right:calc(1385px - 93.5px);top:393.20px;color:#f03a3a">161.8...</div>
<div class="t8 mw r" style="right:calc(1385px - 124.5px);top:393.20px;color:#f03a3a">161.8...</div>
<div class="t8 mw r" style="right:calc(1385px - 156.5px);top:393.20px;color:#4a4af0">0.18%</div>
<div style="position:absolute;left:2px;top:406.03px;width:158px;height:14.43px;background:#ffffff"></div>
<div style="position:absolute;left:2px;top:419.46px;width:158px;height:1px;background:#f3e6e6"></div>
<div style="position:absolute;left:65px;top:406.03px;width:1px;height:14.43px;background:#eadcdc"></div>
<div style="position:absolute;left:96px;top:406.03px;width:1px;height:14.43px;background:#eadcdc"></div>
<div style="position:absolute;left:127px;top:406.03px;width:1px;height:14.43px;background:#eadcdc"></div>
<div style="position:absolute;left:7px;top:409.53px"><svg class="ar" width="7" height="7" viewBox="0 0 7 7"><path d="M1.2 5.8L5.5 1.5M2.5 1.5H5.5V4.5" stroke="#30a040" stroke-width="0.9" fill="none"/></svg></div>
<div class="t8 mw" style="left:18px;top:407.63px;color:#262626">CADCHF</div>
<div class="t8 mw r" style="right:calc(1385px - 93.5px);top:407.63px;color:#f03a3a">0.743...</div>
<div class="t8 mw r" style="right:calc(1385px - 124.5px);top:407.63px;color:#4a4af0">0.743...</div>
<div class="t8 mw r" style="right:calc(1385px - 156.5px);top:407.63px;color:#4a4af0">0.16%</div>
<div style="position:absolute;left:2px;top:420.46px;width:158px;height:10.04px;background:#d9d9d9"></div>
<div style="position:absolute;left:65px;top:420.46px;width:1px;height:10.04px;background:#eadcdc"></div>
<div style="position:absolute;left:96px;top:420.46px;width:1px;height:10.04px;background:#eadcdc"></div>
<div style="position:absolute;left:127px;top:420.46px;width:1px;height:10.04px;background:#eadcdc"></div>
<div style="position:absolute;left:7px;top:423.96px"><svg class="ar" width="7" height="7" viewBox="0 0 7 7"><path d="M1.2 1.2L5.5 5.5M2.5 5.5H5.5V2.5" stroke="#e84040" stroke-width="0.9" fill="none"/></svg></div>
<div class="t8 mw" style="left:18px;top:422.06px;color:#262626">USDHKD</div>
<div class="t8 mw r" style="right:calc(1385px - 93.5px);top:422.06px;color:#f03a3a">7.849...</div>
<div class="t8 mw r" style="right:calc(1385px - 124.5px);top:422.06px;color:#f03a3a">7.850...</div>
<div class="t8 mw r" style="right:calc(1385px - 156.5px);top:422.06px;color:#f03a3a">-0.00%</div>
<div style="position:absolute;left:161px;top:86px;width:11px;height:345px;background:#f0f0f0"></div>
<svg style="position:absolute;left:162px;top:89px" width="9" height="7"><path d="M1.5 5L4.5 2L7.5 5" stroke="#404040" stroke-width="1.2" fill="none"/></svg>
<div style="position:absolute;left:162px;top:98px;width:9px;height:12px;background:#cdcdcd"></div>
<svg style="position:absolute;left:162px;top:421px" width="9" height="7"><path d="M1.5 2L4.5 5L7.5 2" stroke="#404040" stroke-width="1.2" fill="none"/></svg>
<div style="position:absolute;left:2px;top:430px;width:170px;height:1px;background:#404040"></div>
<div style="position:absolute;left:4px;top:430px;width:46px;height:13.5px;background:#fff;border:1px solid #404040;border-top:none;border-radius:0 0 2px 2px"></div>
<div class="t8" style="left:11.5px;top:432.8px;line-height:11px;font-size:8.3px;color:#202020">Symbols</div>
<div class="t8" style="left:58.5px;top:432.8px;line-height:11px;font-size:8.3px;color:#8a8a8a">Details</div>
<div style="position:absolute;left:91px;top:434px;width:1px;height:9px;background:#707070"></div>
<div class="t8" style="left:98.5px;top:432.8px;line-height:11px;font-size:8.3px;color:#8a8a8a">Trading</div>
<div style="position:absolute;left:134.5px;top:434px;width:1px;height:9px;background:#707070"></div>
<div class="t8" style="left:141.5px;top:432.8px;line-height:11px;font-size:8.3px;color:#8a8a8a">Ticks</div>
<div style="position:absolute;left:173px;top:86px;width:1px;height:345px;background:#dcdcdc"></div>
<svg width="1209" height="374" viewBox="176 74 1209 374" style="position:absolute;left:176px;top:74px">
<rect x="176.5" y="74" width="1209" height="374" fill="#000"/>
<path d="M201.9 76V433M224.97 76V433M248.05 76V433M271.12 76V433M294.19 76V433M317.26 76V433M340.34 76V433M363.41 76V433M386.48 76V433M409.56 76V433M432.63 76V433M455.7 76V433M478.78 76V433M501.85 76V433M524.92 76V433M548.0 76V433M571.07 76V433M594.14 76V433M617.21 76V433M640.29 76V433M663.36 76V433M686.43 76V433M709.51 76V433M732.58 76V433M755.65 76V433M778.73 76V433M801.8 76V433M824.87 76V433M847.94 76V433M871.02 76V433M894.09 76V433M917.16 76V433M940.24 76V433M963.31 76V433M986.38 76V433M1009.46 76V433M1032.53 76V433M1055.6 76V433M1078.67 76V433M1101.75 76V433M1124.82 76V433M1147.89 76V433M1170.97 76V433M1194.04 76V433M1217.11 76V433M1240.19 76V433M1263.26 76V433M1286.33 76V433M1309.4 76V433M1332.48 76V433" stroke="#a8a8a8" stroke-width="1" stroke-dasharray="2.2 2.1" fill="none"/>
<path d="M179 79.65H1345M179 103.29H1345M179 126.93H1345M179 150.57H1345M179 174.21H1345M179 197.85H1345M179 221.49H1345M179 245.13H1345M179 268.77H1345M179 292.41H1345M179 316.05H1345M179 339.69H1345M179 363.33H1345M179 386.97H1345M179 410.61H1345" stroke="#a8a8a8" stroke-width="1" stroke-dasharray="2.2 2.1" fill="none"/>
<path d="M179 138H1345" stroke="#7c7c7c" stroke-width="1.7" fill="none"/>
<path d="M178.5 76V433.5H1345.5V76" stroke="#e0e0e0" stroke-width="1" fill="none"/>
<path d="M178 75.5H1346" stroke="#909090" stroke-width="1" fill="none"/>
<path d="M767 426.7V433M779 423.4V433M790 420.2V433M802 423.4V433M813 426V433M825 424.5V433M836 423V433M848 420.2V433M860 416.9V433M871 402V433M883 414.7V433M894 420.2V433M906 424.9V433M917 422.3V433M929 425.6V433M940 429.3V433M952 432V433M963 429.9V433M975 430.6V433M986 426.7V433M998 427.3V433M1010 428.8V433M1021 430.3V433M1033 431V433M1044 428.2V433M1056 423.4V433M1067 420.6V433M1079 424.5V433M1090 424.5V433M1102 425.1V433M1113 416.9V433M1125 417.6V433M1136 409.3V433M1148 408.9V433M1159 414.1V433M1171 418V433M1183 421.7V433M1194 423V433M1206 424.5V433M1217 428.8V433M1229 432V433M1240 428.4V433M1252 429.9V433M1263 426.2V433M1275 424.1V433M1286 426V433M1298 429.5V433M1309 429.9V433M1321 427.1V433M1332 428.4V433M191 429.5V433" stroke="#34cc34" stroke-width="2" fill="none"/>
<path d="M179.0 285V326M190.54 290V326M363.56 171V195M375.1 183.7V195M432.77 172V195M444.3 167V200M455.84 153.7V195M451.84 179.7H459.34M467.38 167V195M478.91 158.7V200M490.44 130.9V180.2M501.98 134.8V168.2M513.51 118.1V165.9M509.51 153.9H517.01M525.05 122.9V168.2M536.59 133.3V167M548.12 123.4V150.8M559.65 129.3V195M571.19 145.2V195M582.73 111.8V195M594.26 96.4V195M605.79 135.6V195M617.33 166.7V200M628.87 161.1V195M640.4 161.1V200M651.93 132.5V177.8M663.47 106.2V138M675.0 113.4V145.2M686.54 110.2V137.2M698.08 91.1V126.1M709.61 84V103M721.14 100.7V170.6M732.68 140.4V176.2M744.22 152V171.1M755.75 162.7V176.5M767.28 166.7V187.3M778.82 145.2V186M790.36 138V168M801.89 132.4V171.7M813.42 154.5V179.2M824.96 150.2V195.1M836.5 159.5V201.6M848.03 190V233.3M859.57 178.2V225.8M871.1 103.4V201.5M882.63 101.5V150.2M894.17 127.7V181M905.7 167V202.6M917.24 190V224M928.77 203V226.4M924.77 207H932.27M940.31 201.1V224.5M951.85 201.1V217.6M963.38 188V207.7M974.91 174V190.8M986.45 174V212.3M997.99 200.2V228.2M1009.52 184.3V217M1021.06 188V207.1M1017.06 200.2H1024.56M1032.59 198.3V211.4M1044.12 193.6V221.3M1055.66 174.9V204.9M1051.66 196H1059.16M1067.19 178.7V213.3M1078.73 175V212.5M1090.26 181.8V236.4M1101.8 226V268.2M1113.34 197.7V261.4M1124.87 197.7V237.5M1136.4 122.7V218.2M1147.94 145.5V198.9M1159.47 145.5V189.1M1171.01 133V193.2M1182.55 132.3V188.6M1194.08 172V206.8M1205.62 164.8V200M1217.15 140.3V172.2M1228.68 142.7V163.7M1240.22 136.1V155.9M1251.76 133.4V153.5M1263.29 128.3V146.3M1274.83 115V138.5M1286.36 119V134.9M1297.89 128.3V140.3M1309.43 132.5V146.7M1320.96 121.7V150.5M1332.5 127.7V149.9" stroke="#34cc34" stroke-width="1" fill="none"/>
<rect x="186.54" y="294" width="7" height="29.80000000000001" fill="#000" stroke="#34cc34" stroke-width="1"/>
<rect x="440.3" y="179.4" width="7" height="20.599999999999994" fill="#000" stroke="#34cc34" stroke-width="1"/>
<rect x="474.91" y="167" width="7" height="33" fill="#000" stroke="#34cc34" stroke-width="1"/>
<rect x="486.44" y="148.4" width="7" height="18.599999999999994" fill="#000" stroke="#34cc34" stroke-width="1"/>
<rect x="532.59" y="147.9" width="7" height="15.599999999999994" fill="#000" stroke="#34cc34" stroke-width="1"/>
<rect x="544.12" y="135.2" width="7" height="13.200000000000017" fill="#000" stroke="#34cc34" stroke-width="1"/>
<rect x="567.19" y="158.2" width="7" height="23.100000000000023" fill="#000" stroke="#34cc34" stroke-width="1"/>
<rect x="578.73" y="145.2" width="7" height="13.200000000000017" fill="#000" stroke="#34cc34" stroke-width="1"/>
<rect x="636.4" y="168" width="7" height="32" fill="#000" stroke="#34cc34" stroke-width="1"/>
<rect x="647.93" y="136.1" width="7" height="32.099999999999994" fill="#000" stroke="#34cc34" stroke-width="1"/>
<rect x="659.47" y="115" width="7" height="22.19999999999999" fill="#000" stroke="#34cc34" stroke-width="1"/>
<rect x="671.0" y="122.1" width="7" height="5.6000000000000085" fill="#000" stroke="#34cc34" stroke-width="1"/>
<rect x="682.54" y="112.3" width="7" height="19.39999999999999" fill="#000" stroke="#34cc34" stroke-width="1"/>
<rect x="694.08" y="93.5" width="7" height="19.099999999999994" fill="#000" stroke="#34cc34" stroke-width="1"/>
<rect x="728.68" y="155.8" width="7" height="10.899999999999977" fill="#000" stroke="#34cc34" stroke-width="1"/>
<rect x="774.82" y="154.2" width="7" height="25.200000000000017" fill="#000" stroke="#34cc34" stroke-width="1"/>
<rect x="786.36" y="148.3" width="7" height="7.099999999999994" fill="#000" stroke="#34cc34" stroke-width="1"/>
<rect x="820.96" y="160.5" width="7" height="16.400000000000006" fill="#000" stroke="#34cc34" stroke-width="1"/>
<rect x="855.57" y="200.2" width="7" height="20.0" fill="#000" stroke="#34cc34" stroke-width="1"/>
<rect x="867.1" y="103.4" width="7" height="98.1" fill="#000" stroke="#34cc34" stroke-width="1"/>
<rect x="947.85" y="202.6" width="7" height="15.0" fill="#000" stroke="#34cc34" stroke-width="1"/>
<rect x="959.38" y="189.9" width="7" height="13.5" fill="#000" stroke="#34cc34" stroke-width="1"/>
<rect x="970.91" y="175.3" width="7" height="15.0" fill="#000" stroke="#34cc34" stroke-width="1"/>
<rect x="993.99" y="206.3" width="7" height="4.199999999999989" fill="#000" stroke="#34cc34" stroke-width="1"/>
<rect x="1005.52" y="200.2" width="7" height="6.900000000000006" fill="#000" stroke="#34cc34" stroke-width="1"/>
<rect x="1040.12" y="195.5" width="7" height="11.599999999999994" fill="#000" stroke="#34cc34" stroke-width="1"/>
<rect x="1074.73" y="189.8" width="7" height="10.199999999999989" fill="#000" stroke="#34cc34" stroke-width="1"/>
<rect x="1109.34" y="205.7" width="7" height="48.80000000000001" fill="#000" stroke="#34cc34" stroke-width="1"/>
<rect x="1132.4" y="165.9" width="7" height="52.29999999999998" fill="#000" stroke="#34cc34" stroke-width="1"/>
<rect x="1167.01" y="138.2" width="7" height="41.80000000000001" fill="#000" stroke="#34cc34" stroke-width="1"/>
<rect x="1201.62" y="166.4" width="7" height="25.599999999999994" fill="#000" stroke="#34cc34" stroke-width="1"/>
<rect x="1213.15" y="154.4" width="7" height="11.799999999999983" fill="#000" stroke="#34cc34" stroke-width="1"/>
<rect x="1224.68" y="145.5" width="7" height="16.5" fill="#000" stroke="#34cc34" stroke-width="1"/>
<rect x="1247.76" y="138.5" width="7" height="15.0" fill="#000" stroke="#34cc34" stroke-width="1"/>
<rect x="1259.29" y="134.6" width="7" height="3.9000000000000057" fill="#000" stroke="#34cc34" stroke-width="1"/>
<rect x="1270.83" y="126.2" width="7" height="8.700000000000003" fill="#000" stroke="#34cc34" stroke-width="1"/>
<rect x="1328.5" y="138.2" width="7" height="8.100000000000023" fill="#000" stroke="#34cc34" stroke-width="1"/>
<rect x="175.0" y="287.8" width="7" height="35.599999999999966" fill="#fff" stroke="#34cc34" stroke-width="1"/>
<rect x="463.38" y="179" width="7" height="9.300000000000011" fill="#fff" stroke="#34cc34" stroke-width="1"/>
<rect x="497.98" y="148" width="7" height="6.400000000000006" fill="#fff" stroke="#34cc34" stroke-width="1"/>
<rect x="521.05" y="153.1" width="7" height="10.099999999999994" fill="#fff" stroke="#34cc34" stroke-width="1"/>
<rect x="555.65" y="135.2" width="7" height="45.5" fill="#fff" stroke="#34cc34" stroke-width="1"/>
<rect x="590.26" y="145.2" width="7" height="6.300000000000011" fill="#fff" stroke="#34cc34" stroke-width="1"/>
<rect x="601.79" y="151.5" width="7" height="23.099999999999994" fill="#fff" stroke="#34cc34" stroke-width="1"/>
<rect x="613.33" y="174.6" width="7" height="25.400000000000006" fill="#fff" stroke="#34cc34" stroke-width="1"/>
<rect x="705.61" y="93.8" width="7" height="7.299999999999997" fill="#fff" stroke="#34cc34" stroke-width="1"/>
<rect x="717.14" y="101.1" width="7" height="65.9" fill="#fff" stroke="#34cc34" stroke-width="1"/>
<rect x="740.22" y="155.8" width="7" height="13.699999999999989" fill="#fff" stroke="#34cc34" stroke-width="1"/>
<rect x="751.75" y="168" width="7" height="2.5999999999999943" fill="#fff" stroke="#34cc34" stroke-width="1"/>
<rect x="763.28" y="170.2" width="7" height="8.400000000000006" fill="#fff" stroke="#34cc34" stroke-width="1"/>
<rect x="797.89" y="148.9" width="7" height="16.19999999999999" fill="#fff" stroke="#34cc34" stroke-width="1"/>
<rect x="809.42" y="165.7" width="7" height="11.200000000000017" fill="#fff" stroke="#34cc34" stroke-width="1"/>
<rect x="832.5" y="161.4" width="7" height="31.799999999999983" fill="#fff" stroke="#34cc34" stroke-width="1"/>
<rect x="844.03" y="193.2" width="7" height="27.0" fill="#fff" stroke="#34cc34" stroke-width="1"/>
<rect x="878.63" y="103.4" width="7" height="36.099999999999994" fill="#fff" stroke="#34cc34" stroke-width="1"/>
<rect x="890.17" y="139.5" width="7" height="34.400000000000006" fill="#fff" stroke="#34cc34" stroke-width="1"/>
<rect x="901.7" y="173.9" width="7" height="19.299999999999983" fill="#fff" stroke="#34cc34" stroke-width="1"/>
<rect x="913.24" y="193.5" width="7" height="12.699999999999989" fill="#fff" stroke="#34cc34" stroke-width="1"/>
<rect x="936.31" y="206.3" width="7" height="4.5" fill="#fff" stroke="#34cc34" stroke-width="1"/>
<rect x="982.45" y="175.3" width="7" height="34.79999999999998" fill="#fff" stroke="#34cc34" stroke-width="1"/>
<rect x="1028.59" y="199.2" width="7" height="7.5" fill="#fff" stroke="#34cc34" stroke-width="1"/>
<rect x="1063.19" y="190.8" width="7" height="9.899999999999977" fill="#fff" stroke="#34cc34" stroke-width="1"/>
<rect x="1086.26" y="189.8" width="7" height="37.5" fill="#fff" stroke="#34cc34" stroke-width="1"/>
<rect x="1097.8" y="226.8" width="7" height="28.19999999999999" fill="#fff" stroke="#34cc34" stroke-width="1"/>
<rect x="1120.87" y="205.7" width="7" height="12.0" fill="#fff" stroke="#34cc34" stroke-width="1"/>
<rect x="1143.94" y="165.5" width="7" height="6.800000000000011" fill="#fff" stroke="#34cc34" stroke-width="1"/>
<rect x="1155.47" y="172.7" width="7" height="7.300000000000011" fill="#fff" stroke="#34cc34" stroke-width="1"/>
<rect x="1178.55" y="138.6" width="7" height="33.70000000000002" fill="#fff" stroke="#34cc34" stroke-width="1"/>
<rect x="1190.08" y="172.7" width="7" height="19.30000000000001" fill="#fff" stroke="#34cc34" stroke-width="1"/>
<rect x="1236.22" y="146.3" width="7" height="6.399999999999977" fill="#fff" stroke="#34cc34" stroke-width="1"/>
<rect x="1282.36" y="126.5" width="7" height="2.0" fill="#fff" stroke="#34cc34" stroke-width="1"/>
<rect x="1293.89" y="129.1" width="7" height="9.400000000000006" fill="#fff" stroke="#34cc34" stroke-width="1"/>
<rect x="1305.43" y="138.7" width="7" height="4.0" fill="#fff" stroke="#34cc34" stroke-width="1"/>
<rect x="1316.96" y="142.1" width="7" height="3.5999999999999943" fill="#fff" stroke="#34cc34" stroke-width="1"/>
<rect x="176.5" y="74" width="2" height="375" fill="#000"/>
<path d="M178.5 76V433.5" stroke="#e0e0e0" stroke-width="1" fill="none"/>
<path d="M224.97 433V437M271.12 433V437M317.26 433V437M363.41 433V437M409.56 433V437M455.7 433V437M501.85 433V437M548.0 433V437M594.14 433V437M640.29 433V437M686.43 433V437M732.58 433V437M778.73 433V437M824.87 433V437M871.02 433V437M917.16 433V437M963.31 433V437M1009.46 433V437M1055.6 433V437M1101.75 433V437M1147.89 433V437M1194.04 433V437M1240.19 433V437M1286.33 433V437M1332.48 433V437" stroke="#e0e0e0" stroke-width="1" fill="none"/>
<path d="M1345 79.5H1348M1345 103.5H1348M1345 126.5H1348M1345 150.5H1348M1345 174.5H1348M1345 197.5H1348M1345 221.5H1348M1345 244.5H1348M1345 268.5H1348M1345 292.5H1348M1345 315.5H1348M1345 339.5H1348M1345 363.5H1348M1345 386.5H1348M1345 410.5H1348" stroke="#e0e0e0" stroke-width="1" fill="none"/>
<path d="M868 127.5L871 124.5L874 127.5L871 130.5Z" fill="#4a8bd6" stroke="#cfe0f5" stroke-width="0.7"/><path d="M868 132L871 129L874 132L871 135Z" fill="#4a8bd6" stroke="#cfe0f5" stroke-width="0.7"/><path d="M868 136.5L871 133.5L874 136.5L871 139.5Z" fill="#4a8bd6" stroke="#cfe0f5" stroke-width="0.7"/><path d="M868 145.5L871 142.5L874 145.5L871 148.5Z" fill="#4a8bd6" stroke="#cfe0f5" stroke-width="0.7"/><path d="M868 161.5L871 158.5L874 161.5L871 164.5Z" fill="#4a8bd6" stroke="#cfe0f5" stroke-width="0.7"/><path d="M868 170.8L871 167.8L874 170.8L871 173.8Z" fill="#4a8bd6" stroke="#cfe0f5" stroke-width="0.7"/><path d="M879 103L882 100L885 103L882 106Z" fill="#e05030" stroke="#ffd0c0" stroke-width="0.7"/><path d="M879 108L882 105L885 108L882 111Z" fill="#e05030" stroke="#ffd0c0" stroke-width="0.7"/><path d="M1052.5 192L1056 188.5L1059.5 192L1056 195.5Z" fill="#e05030" stroke="#fff" stroke-width="0.7"/><path d="M1052.5 197L1056 193.5L1059.5 197L1056 200.5Z" fill="#3070d0" stroke="#fff" stroke-width="0.7"/>
</svg>
<div class="pl" style="top:74.8px">1.28935</div>
<div class="pl" style="top:98.4px">1.28840</div>
<div class="pl" style="top:122.1px">1.28745</div>
<div class="pl" style="top:145.7px">1.28650</div>
<div class="pl" style="top:169.4px">1.28555</div>
<div class="pl" style="top:193.0px">1.28460</div>
<div class="pl" style="top:216.6px">1.28365</div>
<div class="pl" style="top:240.3px">1.28270</div>
<div class="pl" style="top:263.9px">1.28175</div>
<div class="pl" style="top:287.6px">1.28080</div>
<div class="pl" style="top:311.2px">1.27985</div>
<div class="pl" style="top:334.8px">1.27890</div>
<div class="pl" style="top:358.5px">1.27795</div>
<div class="pl" style="top:382.1px">1.27700</div>
<div class="pl" style="top:405.8px">1.27605</div>
<div style="position:absolute;left:1348px;top:134px;width:28px;height:8px;background:#8a9bb0"></div>
<div class="pl" style="top:133.2px;color:#1a2a3a">1.28701</div>
<div class="tl" style="left:1332.2px">5 Aug 09:00</div>
<div class="tl" style="left:1286.0px">5 Aug 05:00</div>
<div class="tl" style="left:1239.9px">5 Aug 01:00</div>
<div class="tl" style="left:1193.7px">4 Aug 21:00</div>
<div class="tl" style="left:1147.6px">4 Aug 17:00</div>
<div class="tl" style="left:1101.4px">4 Aug 13:00</div>
<div class="tl" style="left:1055.3px">4 Aug 09:00</div>
<div class="tl" style="left:1009.2px">4 Aug 05:00</div>
<div class="tl" style="left:963.0px">4 Aug 01:00</div>
<div class="tl" style="left:916.9px">3 Aug 21:00</div>
<div class="tl" style="left:870.7px">3 Aug 17:00</div>
<div class="tl" style="left:824.6px">3 Aug 13:00</div>
<div class="tl" style="left:778.4px">3 Aug 09:00</div>
<div class="tl" style="left:732.3px">3 Aug 05:00</div>
<div class="tl" style="left:179px">1 Aug 2022</div>
<svg style="position:absolute;left:182px;top:79px" width="28" height="10" viewBox="0 0 28 10"><rect x="0" y="1" width="4" height="8" fill="#f08080"/><rect x="5" y="1" width="4" height="8" fill="#80c0f0"/><path d="M0 3.5H9M0 6H9" stroke="#fff" stroke-width="0.7"/><rect x="15" y="3" width="4" height="6" fill="#f08080"/><rect x="21" y="1" width="4" height="8" fill="#80d0f0"/><path d="M15 3V1H18" stroke="#fff" stroke-width="0.8" fill="none"/></svg>
<div class="t8" style="left:211.7px;top:78.5px;line-height:11px;font-size:6.9px;color:#e8e8e8">USDCAD, H1:&nbsp; US Dollar vs Canadian Dollar</div>
<div style="position:absolute;left:181.5px;top:92px;width:31px;height:14.5px;background:linear-gradient(#4a4af8,#3434ea)"></div>
<div class="t8" style="left:181.5px;width:31px;text-align:center;top:93.5px;line-height:11px;font-size:7.3px;color:#e8e8ff">SELL</div>
<div style="position:absolute;left:284.5px;top:92px;width:31px;height:14.5px;background:linear-gradient(#4a4af8,#3434ea)"></div>
<div class="t8" style="left:284.5px;width:31px;text-align:center;top:93.5px;line-height:11px;font-size:7.3px;color:#e8e8ff">BUY</div>
<div style="position:absolute;left:213.5px;top:91.5px;width:69.5px;height:14.5px;background:#fff;border:0.5px solid #c0c0c0;box-sizing:border-box"></div>
<div style="position:absolute;left:214px;top:92px;width:14px;height:13.5px;background:#e4e4e4"></div>
<div style="position:absolute;left:268.5px;top:92px;width:14px;height:13.5px;background:#e4e4e4"></div>
<svg style="position:absolute;left:218px;top:96px" width="6" height="5"><path d="M0.5 1H5.5L3 4Z" fill="#202020"/></svg>
<svg style="position:absolute;left:272.5px;top:96px" width="6" height="5"><path d="M0.5 4H5.5L3 1Z" fill="#202020"/></svg>
<div class="t8 r" style="right:calc(1385px - 266.5px);top:93.5px;line-height:11px;font-size:7.8px;color:#303030">1.00</div>
<div style="position:absolute;left:181.5px;top:107px;width:66.5px;height:26px;background:linear-gradient(#2c2cf0,#0c0cc4)"></div>
<div style="position:absolute;left:183.5px;top:106.5px;width:62.5px;height:0.8px;background:#6a6af8"></div>
<div class="t8" style="left:191.2px;top:120px;line-height:11px;font-size:8.8px;font-weight:bold;color:#fff">1.28</div>
<div class="t8" style="left:210px;top:109.3px;line-height:24px;font-size:21px;color:#fff">70</div>
<div class="t8" style="left:237px;top:111.5px;line-height:10px;font-size:8.3px;color:#fff">1</div>
<div style="position:absolute;left:249.6px;top:107px;width:65.9px;height:26px;background:linear-gradient(#2c2cf0,#0c0cc4)"></div>
<div style="position:absolute;left:251.6px;top:106.5px;width:61.900000000000006px;height:0.8px;background:#6a6af8"></div>
<div class="t8" style="left:258.9px;top:120px;line-height:11px;font-size:8.8px;font-weight:bold;color:#fff">1.28</div>
<div class="t8" style="left:278.7px;top:109.3px;line-height:24px;font-size:21px;color:#fff">70</div>
<div class="t8" style="left:305.2px;top:111.5px;line-height:10px;font-size:8.3px;color:#fff">4</div>
<div style="position:absolute;left:0;top:449px;width:1385px;height:3px;background:#f0f0f0"></div>
<div style="position:absolute;left:0;top:451px;width:1385px;height:1px;background:#c8c8c8"></div>
<div style="position:absolute;left:0;top:452px;width:1385px;height:181px;background:#f0f0f0"></div>
<div style="position:absolute;left:0;top:452px;width:11px;height:181px;background:#dbe3ec"></div>
<div class="t8" style="left:1.5px;top:450px;line-height:12px;font-size:9px;font-weight:bold;color:#202020">×</div>
<div style="position:absolute;left:0px;top:598px;width:11px;height:34px;overflow:hidden"><div class="t8" style="position:absolute;left:50%;top:50%;transform:translate(-50%,-50%) rotate(-90deg);font-size:8.3px;color:#303a48;line-height:10px">Toolbox</div></div>
<div style="position:absolute;left:11px;top:452px;width:1371px;height:163px;background:#fff"></div>
<div style="position:absolute;left:1381px;top:452px;width:1px;height:163px;background:#d8d8d8"></div>
<div class="t8 tbl" style="left:15.6px;top:455.5px;color:#303030">Symbol</div>
<div class="t8 tbl" style="left:180.5px;top:455.5px;color:#303030">Ticket</div>
<div class="t8 tbl r" style="right:997.4px;top:455.5px;color:#303030">Time</div>
<div class="t8 tbl r" style="right:871.1px;top:455.5px;color:#303030">Type</div>
<div class="t8 tbl r" style="right:744.7px;top:455.5px;color:#303030">Volume</div>
<div class="t8 tbl r" style="right:618.4px;top:455.5px;color:#303030">Price</div>
<div class="t8 tbl r" style="right:493.3px;top:455.5px;color:#303030">S / L</div>
<div class="t8 tbl r" style="right:368.0px;top:455.5px;color:#303030">T / P</div>
<div class="t8 tbl r" style="right:241.0px;top:455.5px;color:#303030">Price</div>
<div class="t8 tbl r" style="right:7.6px;top:455.5px;color:#303030">Profit</div>
<div style="position:absolute;left:175px;top:453px;width:1px;height:117px;background:#e4e4e4"></div>
<div style="position:absolute;left:289px;top:453px;width:1px;height:117px;background:#e4e4e4"></div>
<div style="position:absolute;left:390px;top:453px;width:1px;height:117px;background:#e4e4e4"></div>
<div style="position:absolute;left:516px;top:453px;width:1px;height:117px;background:#e4e4e4"></div>
<div style="position:absolute;left:643px;top:453px;width:1px;height:117px;background:#e4e4e4"></div>
<div style="position:absolute;left:769px;top:453px;width:1px;height:117px;background:#e4e4e4"></div>
<div style="position:absolute;left:895px;top:453px;width:1px;height:117px;background:#e4e4e4"></div>
<div style="position:absolute;left:1021px;top:453px;width:1px;height:117px;background:#e4e4e4"></div>
<div style="position:absolute;left:1148px;top:453px;width:1px;height:117px;background:#e4e4e4"></div>
<div style="position:absolute;left:11px;top:483.63px;width:1370px;height:1px;background:#ececec"></div>
<svg style="position:absolute;left:14px;top:472px" width="8" height="11" viewBox="0 0 8 11"><path d="M0.6 0.6H7.4V10.4H0.6Z" fill="#fff" stroke="#3a7ab8" stroke-width="1"/><path d="M2.5 3H5.5M2.5 5.5H5.5" stroke="#3a7ab8" stroke-width="0.8"/></svg>
<div class="t8 tbl" style="left:27px;top:473.60px;color:#262626">geely</div>
<div class="t8 tb" style="left:178px;top:472.70px;color:#262626">4856674</div>
<div class="t8 tb r" style="right:997.4px;top:472.70px;color:#262626">2022.08.05 05:47:48</div>
<div class="t8 tbl r" style="right:871.1px;top:473.60px;color:#262626">buy</div>
<div class="t8 tb r" style="right:744.7px;top:472.70px;color:#262626">1.289K</div>
<div class="t8 tb r" style="right:618.4px;top:472.70px;color:#262626">11.62675</div>
<div class="t8 tb r" style="right:241.0px;top:472.70px;color:#262626">17.84</div>
<div class="t8 tb r" style="right:19.0px;top:472.70px;color:#2a2ae0">1 020 196.60</div>
<svg style="position:absolute;left:1372px;top:474px" width="7" height="7" viewBox="0 0 7 7"><path d="M1 1L6 6M6 1L1 6" stroke="#808080" stroke-width="0.9"/></svg>
<div style="position:absolute;left:11px;top:484.63px;width:1370px;height:14.23px;background:#ececec"></div>
<div style="position:absolute;left:175px;top:484.63px;width:1px;height:14.23px;background:#e0e0e0"></div>
<div style="position:absolute;left:289px;top:484.63px;width:1px;height:14.23px;background:#e0e0e0"></div>
<div style="position:absolute;left:390px;top:484.63px;width:1px;height:14.23px;background:#e0e0e0"></div>
<div style="position:absolute;left:516px;top:484.63px;width:1px;height:14.23px;background:#e0e0e0"></div>
<div style="position:absolute;left:643px;top:484.63px;width:1px;height:14.23px;background:#e0e0e0"></div>
<div style="position:absolute;left:769px;top:484.63px;width:1px;height:14.23px;background:#e0e0e0"></div>
<div style="position:absolute;left:895px;top:484.63px;width:1px;height:14.23px;background:#e0e0e0"></div>
<div style="position:absolute;left:1021px;top:484.63px;width:1px;height:14.23px;background:#e0e0e0"></div>
<div style="position:absolute;left:1148px;top:484.63px;width:1px;height:14.23px;background:#e0e0e0"></div>
<div style="position:absolute;left:11px;top:497.86px;width:1370px;height:1px;background:#ececec"></div>
<svg style="position:absolute;left:14px;top:487px" width="8" height="11" viewBox="0 0 8 11"><path d="M0.6 0.6H7.4V10.4H0.6Z" fill="#fff" stroke="#3a7ab8" stroke-width="1"/><path d="M2.5 3H5.5M2.5 5.5H5.5" stroke="#3a7ab8" stroke-width="0.8"/></svg>
<div class="t8 tbl" style="left:27px;top:487.83px;color:#262626">chowtaifook</div>
<div class="t8 tb" style="left:178px;top:486.93px;color:#262626">4856664</div>
<div class="t8 tb r" style="right:997.4px;top:486.93px;color:#262626">2022.08.05 05:28:32</div>
<div class="t8 tbl r" style="right:871.1px;top:487.83px;color:#262626">buy</div>
<div class="t8 tb r" style="right:744.7px;top:486.93px;color:#262626">123</div>
<div class="t8 tb r" style="right:618.4px;top:486.93px;color:#262626">14.60602</div>
<div class="t8 tb r" style="right:241.0px;top:486.93px;color:#262626">16.14</div>
<div class="t8 tb r" style="right:19.0px;top:486.93px;color:#2a2ae0">4 806.93</div>
<svg style="position:absolute;left:1372px;top:489px" width="7" height="7" viewBox="0 0 7 7"><path d="M1 1L6 6M6 1L1 6" stroke="#808080" stroke-width="0.9"/></svg>
<div style="position:absolute;left:11px;top:512.09px;width:1370px;height:1px;background:#ececec"></div>
<svg style="position:absolute;left:14px;top:501px" width="8" height="11" viewBox="0 0 8 11"><path d="M0.6 0.6H7.4V10.4H0.6Z" fill="#fff" stroke="#3a7ab8" stroke-width="1"/><path d="M2.5 3H5.5M2.5 5.5H5.5" stroke="#3a7ab8" stroke-width="0.8"/></svg>
<div class="t8 tbl" style="left:27px;top:502.06px;color:#262626">aia</div>
<div class="t8 tb" style="left:178px;top:501.16px;color:#262626">4856696</div>
<div class="t8 tb r" style="right:997.4px;top:501.16px;color:#262626">2022.08.05 05:57:04</div>
<div class="t8 tbl r" style="right:871.1px;top:502.06px;color:#262626">buy</div>
<div class="t8 tb r" style="right:744.7px;top:501.16px;color:#262626">452</div>
<div class="t8 tb r" style="right:618.4px;top:501.16px;color:#262626">79.37002</div>
<div class="t8 tb r" style="right:241.0px;top:501.16px;color:#262626">76.95</div>
<div class="t8 tb r" style="right:19.0px;top:501.16px;color:#e02a2a">-27 870.99</div>
<svg style="position:absolute;left:1372px;top:503px" width="7" height="7" viewBox="0 0 7 7"><path d="M1 1L6 6M6 1L1 6" stroke="#808080" stroke-width="0.9"/></svg>
<div style="position:absolute;left:11px;top:513.09px;width:1370px;height:14.23px;background:#c8c8c8"></div>
<svg style="position:absolute;left:13px;top:516px" width="9" height="9" viewBox="0 0 9 9"><circle cx="4.5" cy="4.5" r="3.8" fill="none" stroke="#202020" stroke-width="0.9"/><path d="M4.5 2.3V6.7M2.3 4.5H6.7" stroke="#202020" stroke-width="0.9"/></svg>
<div class="t8 tb" style="left:27px;top:515.29px;color:#101010;font-weight:bold;font-size:8.55px">Balance: 17 012 483.17 USD&nbsp; Equity: 18 009 615.71&nbsp; Margin: 286 915.89&nbsp; Free Margin: 17 722 699.82&nbsp; Margin Level: 6 276.97 %</div>
<div class="t8 tb r" style="right:19.0px;top:515.29px;color:#101010;font-weight:bold;font-size:8.4px">997 132.54</div>
<div style="position:absolute;left:11px;top:540.55px;width:1370px;height:1px;background:#ececec"></div>
<svg style="position:absolute;left:14px;top:529px" width="8" height="11" viewBox="0 0 8 11"><path d="M0.6 0.6H7.4V8L5 10.4H0.6Z" fill="#fff" stroke="#3a7ab8" stroke-width="1"/><path d="M2.5 3H5.5M2.5 5.5H5.5" stroke="#3a7ab8" stroke-width="0.8"/></svg>
<div class="t8 tbl" style="left:27px;top:530.52px;color:#262626">chowtaifook</div>
<div class="t8 tb" style="left:178px;top:529.62px;color:#262626">4857523</div>
<div class="t8 tb r" style="right:997.4px;top:529.62px;color:#262626">2022.08.05 09:24:15</div>
<div class="t8 tbl r" style="right:871.1px;top:530.52px;color:#262626">buy limit</div>
<div class="t8 tb r" style="right:744.7px;top:529.62px;color:#262626">1 / 0</div>
<div class="t8 tb r" style="right:618.4px;top:529.62px;color:#262626">14.14</div>
<div class="t8 tb r" style="right:241.0px;top:529.62px;color:#262626">16.24</div>
<div class="t8 tbl r" style="right:19.0px;top:530.52px;color:#303030">placed</div>
<svg style="position:absolute;left:1372px;top:531px" width="7" height="7" viewBox="0 0 7 7"><path d="M1 1L6 6M6 1L1 6" stroke="#808080" stroke-width="0.9"/></svg>
<div style="position:absolute;left:11px;top:541.55px;width:1370px;height:14.23px;background:#ececec"></div>
<div style="position:absolute;left:175px;top:541.55px;width:1px;height:14.23px;background:#e0e0e0"></div>
<div style="position:absolute;left:289px;top:541.55px;width:1px;height:14.23px;background:#e0e0e0"></div>
<div style="position:absolute;left:390px;top:541.55px;width:1px;height:14.23px;background:#e0e0e0"></div>
<div style="position:absolute;left:516px;top:541.55px;width:1px;height:14.23px;background:#e0e0e0"></div>
<div style="position:absolute;left:643px;top:541.55px;width:1px;height:14.23px;background:#e0e0e0"></div>
<div style="position:absolute;left:769px;top:541.55px;width:1px;height:14.23px;background:#e0e0e0"></div>
<div style="position:absolute;left:895px;top:541.55px;width:1px;height:14.23px;background:#e0e0e0"></div>
<div style="position:absolute;left:1021px;top:541.55px;width:1px;height:14.23px;background:#e0e0e0"></div>
<div style="position:absolute;left:1148px;top:541.55px;width:1px;height:14.23px;background:#e0e0e0"></div>
<div style="position:absolute;left:11px;top:554.78px;width:1370px;height:1px;background:#ececec"></div>
<svg style="position:absolute;left:14px;top:544px" width="8" height="11" viewBox="0 0 8 11"><path d="M0.6 0.6H7.4V8L5 10.4H0.6Z" fill="#fff" stroke="#3a7ab8" stroke-width="1"/><path d="M2.5 3H5.5M2.5 5.5H5.5" stroke="#3a7ab8" stroke-width="0.8"/></svg>
<div class="t8 tbl" style="left:27px;top:544.75px;color:#262626">chowtaifook</div>
<div class="t8 tb" style="left:178px;top:543.85px;color:#262626">4857535</div>
<div class="t8 tb r" style="right:997.4px;top:543.85px;color:#262626">2022.08.05 09:24:35</div>
<div class="t8 tbl r" style="right:871.1px;top:544.75px;color:#262626">buy limit</div>
<div class="t8 tb r" style="right:744.7px;top:543.85px;color:#262626">1 / 0</div>
<div class="t8 tb r" style="right:618.4px;top:543.85px;color:#262626">14.14</div>
<div class="t8 tb r" style="right:241.0px;top:543.85px;color:#262626">16.24</div>
<div class="t8 tbl r" style="right:19.0px;top:544.75px;color:#303030">placed</div>
<svg style="position:absolute;left:1372px;top:546px" width="7" height="7" viewBox="0 0 7 7"><path d="M1 1L6 6M6 1L1 6" stroke="#808080" stroke-width="0.9"/></svg>
<div style="position:absolute;left:11px;top:569.01px;width:1370px;height:1px;background:#ececec"></div>
<svg style="position:absolute;left:14px;top:558px" width="8" height="11" viewBox="0 0 8 11"><path d="M0.6 0.6H7.4V8L5 10.4H0.6Z" fill="#fff" stroke="#3a7ab8" stroke-width="1"/><path d="M2.5 3H5.5M2.5 5.5H5.5" stroke="#3a7ab8" stroke-width="0.8"/></svg>
<div class="t8 tbl" style="left:27px;top:558.98px;color:#262626">chowtaifook</div>
<div class="t8 tb" style="left:178px;top:558.08px;color:#262626">4857554</div>
<div class="t8 tb r" style="right:997.4px;top:558.08px;color:#262626">2022.08.05 09:26:27</div>
<div class="t8 tbl r" style="right:871.1px;top:558.98px;color:#262626">buy limit</div>
<div class="t8 tb r" style="right:744.7px;top:558.08px;color:#262626">1 / 0</div>
<div class="t8 tb r" style="right:618.4px;top:558.08px;color:#262626">14.14</div>
<div class="t8 tb r" style="right:241.0px;top:558.08px;color:#262626">16.24</div>
<div class="t8 tbl r" style="right:19.0px;top:558.98px;color:#303030">placed</div>
<svg style="position:absolute;left:1372px;top:560px" width="7" height="7" viewBox="0 0 7 7"><path d="M1 1L6 6M6 1L1 6" stroke="#808080" stroke-width="0.9"/></svg>
<div style="position:absolute;left:11px;top:615px;width:1371px;height:1.3px;background:#404040"></div>
<div style="position:absolute;left:13px;top:615px;width:34px;height:13.5px;background:#fff;border:1px solid #404040;border-top:none"></div>
<div class="t8" style="left:20.5px;top:617px;line-height:11px;font-size:8.4px;color:#202020">Trade</div>
<div class="t8" style="left:55.9px;top:617px;line-height:11px;font-size:8.4px;color:#8a8a8a">Exposure</div>
<div style="position:absolute;left:97.9px;top:619px;width:1px;height:8px;background:#808080"></div>
<div class="t8" style="left:105px;top:617px;line-height:11px;font-size:8.4px;color:#8a8a8a">History</div>
<div style="position:absolute;left:139.7px;top:619px;width:1px;height:8px;background:#808080"></div>
<div class="t8" style="left:146.8px;top:617px;line-height:11px;font-size:8.4px;color:#8a8a8a">News</div>
<div class="t8" style="left:169px;top:621.5px;line-height:9px;font-size:6.5px;font-weight:bold;color:#e03030">99</div>
<div style="position:absolute;left:183.7px;top:619px;width:1px;height:8px;background:#808080"></div>
<div class="t8" style="left:190.6px;top:617px;line-height:11px;font-size:8.4px;color:#8a8a8a">Mailbox</div>
<div class="t8" style="left:222.5px;top:621.5px;line-height:9px;font-size:6.5px;font-weight:bold;color:#e03030">7</div>
<div style="position:absolute;left:234.3px;top:619px;width:1px;height:8px;background:#808080"></div>
<div class="t8" style="left:240.8px;top:617px;line-height:11px;font-size:8.4px;color:#8a8a8a">Calendar</div>
<div style="position:absolute;left:282.6px;top:619px;width:1px;height:8px;background:#808080"></div>
<div class="t8" style="left:289.8px;top:617px;line-height:11px;font-size:8.4px;color:#8a8a8a">Company</div>
<div style="position:absolute;left:334.3px;top:619px;width:1px;height:8px;background:#808080"></div>
<div class="t8" style="left:341.2px;top:617px;line-height:11px;font-size:8.4px;color:#8a8a8a">Alerts</div>
<div style="position:absolute;left:370.1px;top:619px;width:1px;height:8px;background:#808080"></div>
<div class="t8" style="left:377.5px;top:617px;line-height:11px;font-size:8.4px;color:#8a8a8a">Articles</div>
<div class="t8" style="left:406.3px;top:621.5px;line-height:9px;font-size:6.5px;font-weight:bold;color:#e03030">2</div>
<div style="position:absolute;left:417.9px;top:619px;width:1px;height:8px;background:#808080"></div>
<div class="t8" style="left:425.1px;top:617px;line-height:11px;font-size:8.4px;color:#8a8a8a">Code Base</div>
<div style="position:absolute;left:472.2px;top:619px;width:1px;height:8px;background:#808080"></div>
<div class="t8" style="left:479.2px;top:617px;line-height:11px;font-size:8.4px;color:#8a8a8a">Experts</div>
<div style="position:absolute;left:513.8px;top:619px;width:1px;height:8px;background:#808080"></div>
<div class="t8" style="left:520.8px;top:617px;line-height:11px;font-size:8.4px;color:#8a8a8a">Journal</div>
<svg style="position:absolute;left:1249px;top:619px" width="9" height="10" viewBox="0 0 9 10"><path d="M2.5 3.5V2.5Q4.5 0 6.5 2.5V3.5" stroke="#e0b000" stroke-width="0.9" fill="none"/><path d="M0.8 3.5H8.2L8.8 9.5H0.2Z" fill="#f5c400"/></svg>
<div class="t8" style="left:1261.5px;top:619.5px;line-height:11px;font-size:8.5px;color:#202020">Market</div>
<svg style="position:absolute;left:1296px;top:620px" width="13" height="9" viewBox="0 0 13 9"><circle cx="6.5" cy="4.5" r="1.2" fill="#3a7ab8"/><path d="M4.2 2.2Q3 4.5 4.2 6.8M8.8 2.2Q10 4.5 8.8 6.8M2.2 0.8Q0.3 4.5 2.2 8.2M10.8 0.8Q12.7 4.5 10.8 8.2" stroke="#3a7ab8" stroke-width="0.9" fill="none"/></svg>
<div class="t8" style="left:1311.5px;top:619.5px;line-height:11px;font-size:8.5px;color:#202020">Signals</div>
<svg style="position:absolute;left:1347px;top:619px" width="12" height="11" viewBox="0 0 12 11"><path d="M2.5 7Q0.5 7 0.7 5Q1 3.5 2.8 3.8Q3.5 1 6.2 1.1Q9 1.3 9 4Q11.3 4.3 11.1 5.8Q11 7 9.3 7Z" fill="none" stroke="#c0c0c0" stroke-width="0.9"/><path d="M6 7V10M3 10H9" stroke="#c0c0c0" stroke-width="0.9"/></svg>
<div class="t8" style="left:1361px;top:619.5px;line-height:11px;font-size:8.5px;color:#b8b8b8">VPS</div>
<div style="position:absolute;left:0;top:633px;width:1385px;height:1px;background:#d0d0d0"></div>
<div style="position:absolute;left:0;top:636px;width:1385px;height:1px;background:#c8c8c8"></div>
<div style="position:absolute;left:0;top:637px;width:11px;height:92px;background:#dbe3ec"></div>
<div class="t8" style="left:1.5px;top:635px;line-height:12px;font-size:9px;font-weight:bold;color:#202020">×</div>
<div style="position:absolute;left:0px;top:668px;width:11px;height:59px;overflow:hidden"><div class="t8" style="position:absolute;left:50%;top:50%;transform:translate(-50%,-50%) rotate(-90deg);font-size:8.3px;color:#303a48;line-height:10px">Strategy Tester</div></div>
<div style="position:absolute;left:11px;top:637px;width:1371px;height:75px;background:#fff"></div>
<div class="t8 r" style="right:1283px;top:646px;line-height:11px;font-size:7.3px;color:#202020">Expert:</div>
<div class="t8 r" style="right:1283px;top:666px;line-height:11px;font-size:7.3px;color:#202020">Symbol:</div>
<div class="t8 r" style="right:1283px;top:687px;line-height:11px;font-size:7.3px;color:#202020">Date:</div>
<div style="position:absolute;left:108px;top:643px;width:431px;height:13px;background:#e5e5e5;border:1px solid #adadad"></div><div class="t8" style="left:110.5px;top:643px;line-height:15px;font-size:7.4px;color:#202020">Sell Limit.ex5</div><svg style="position:absolute;left:529px;top:647px" width="9" height="6" viewBox="0 0 9 6"><path d="M1 1.5L4.5 5L8 1.5" stroke="#404040" stroke-width="1" fill="none"/></svg>
<div style="position:absolute;left:108px;top:664px;width:220px;height:13px;background:#fff;border:1px solid #a8a8a8"></div><div class="t8" style="left:110.5px;top:664px;line-height:15px;font-size:7.4px;color:#202020">AUDUSD</div><svg style="position:absolute;left:318px;top:668px" width="9" height="6" viewBox="0 0 9 6"><path d="M1 1.5L4.5 5L8 1.5" stroke="#404040" stroke-width="1" fill="none"/></svg>
<div style="position:absolute;left:334px;top:664px;width:82px;height:13px;background:#e5e5e5;border:1px solid #adadad"></div><div class="t8" style="left:336.5px;top:664px;line-height:15px;font-size:7.4px;color:#202020">H1</div><svg style="position:absolute;left:406px;top:668px" width="9" height="6" viewBox="0 0 9 6"><path d="M1 1.5L4.5 5L8 1.5" stroke="#404040" stroke-width="1" fill="none"/></svg>
<div style="position:absolute;left:108px;top:685px;width:130px;height:13px;background:#e5e5e5;border:1px solid #adadad"></div><div class="t8" style="left:110.5px;top:685px;line-height:15px;font-size:7.4px;color:#202020">Last year</div><svg style="position:absolute;left:228px;top:689px" width="9" height="6" viewBox="0 0 9 6"><path d="M1 1.5L4.5 5L8 1.5" stroke="#404040" stroke-width="1" fill="none"/></svg>
<div style="position:absolute;left:245px;top:685px;width:83px;height:13px;background:#fff;border:1px solid #a8a8a8"></div><div class="t8" style="left:247.5px;top:685px;line-height:15px;font-size:7.4px;color:#909090">2022.01.01</div>
<div style="position:absolute;left:334px;top:685px;width:82px;height:13px;background:#fff;border:1px solid #a8a8a8"></div><div class="t8" style="left:336.5px;top:685px;line-height:15px;font-size:7.4px;color:#909090">2022.08.04</div>
<svg style="position:absolute;left:309px;top:688px" width="14" height="9" viewBox="0 0 14 9"><rect x="0.5" y="0.5" width="6" height="8" fill="#f4f4f4" stroke="#c0c0c0" stroke-width="0.8"/><path d="M9 3.5L11 5.5L13 3.5" stroke="#a0a0a0" stroke-width="0.9" fill="none"/></svg>
<svg style="position:absolute;left:398px;top:688px" width="14" height="9" viewBox="0 0 14 9"><rect x="0.5" y="0.5" width="6" height="8" fill="#f4f4f4" stroke="#c0c0c0" stroke-width="0.8"/><path d="M9 3.5L11 5.5L13 3.5" stroke="#a0a0a0" stroke-width="0.9" fill="none"/></svg>
<div style="position:absolute;left:547px;top:643px;width:14px;height:14px;background:#e5f1fb;border:1px solid #c0d4e4"></div>
<div class="t8" style="left:548px;top:644px;line-height:14px;font-size:6.5px;color:#2f6fb0;letter-spacing:-0.4px;font-weight:bold">IDE</div>
<div style="position:absolute;left:568px;top:643px;width:14px;height:14px;background:#e5f1fb;border:1px solid #c0d4e4"></div>
<svg style="position:absolute;left:569px;top:644px" width="14" height="14" viewBox="0 0 14 14"><circle cx="7" cy="7" r="4.3" fill="none" stroke="#3a7ab8" stroke-width="1.6" stroke-dasharray="1.7 1.1"/><circle cx="7" cy="7" r="2.8" fill="none" stroke="#3a7ab8" stroke-width="1"/><circle cx="7" cy="7" r="1" fill="#3a7ab8"/></svg>
<div style="position:absolute;left:425px;top:664px;width:14px;height:14px;background:#e8e8e8;border:1px solid #c8c8c8"></div>
<svg style="position:absolute;left:427px;top:666px" width="12" height="12" viewBox="0 0 12 12"><rect x="0" y="0" width="11" height="11" rx="1" fill="#f5c400"/><text x="5.5" y="8.7" font-family="Liberation Sans" font-size="9" font-weight="bold" fill="#a07000" text-anchor="middle">$</text></svg>
<div style="position:absolute;left:1371px;top:637px;width:10px;height:74px;background:#f0f0f0"></div>
<svg style="position:absolute;left:1372px;top:640px" width="9" height="7" viewBox="0 0 9 7"><path d="M1.5 5L4.5 2L7.5 5" stroke="#404040" stroke-width="1.2" fill="none"/></svg>
<div style="position:absolute;left:1372px;top:649px;width:8px;height:19px;background:#cdcdcd"></div>
<svg style="position:absolute;left:1372px;top:701px" width="9" height="7" viewBox="0 0 9 7"><path d="M1.5 2L4.5 5L7.5 2" stroke="#404040" stroke-width="1.2" fill="none"/></svg>
<div style="position:absolute;left:11px;top:711.5px;width:1371px;height:1.3px;background:#404040"></div>
<div style="position:absolute;left:63px;top:711.5px;width:42.5px;height:13.5px;background:#fff;border:1px solid #404040;border-top:none"></div>
<div class="t8" style="left:20.6px;top:713.5px;line-height:11px;font-size:8.4px;color:#8a8a8a">Overview</div>
<div class="t8" style="left:69.5px;top:713.5px;line-height:11px;font-size:8.4px;color:#202020">Settings</div>
<div class="t8" style="left:114.4px;top:713.5px;line-height:11px;font-size:8.4px;color:#8a8a8a">Inputs</div>
<div style="position:absolute;left:146px;top:715.5px;width:1px;height:8px;background:#808080"></div>
<div class="t8" style="left:153.3px;top:713.5px;line-height:11px;font-size:8.4px;color:#8a8a8a">Agents</div>
<div style="position:absolute;left:186.5px;top:715.5px;width:1px;height:8px;background:#808080"></div>
<div class="t8" style="left:193.8px;top:713.5px;line-height:11px;font-size:8.4px;color:#8a8a8a">Journal</div>
<div style="position:absolute;left:1328px;top:714px;width:53px;height:11.5px;background:#7cc85a"></div>
<div class="t8" style="left:1328px;width:53px;text-align:center;top:714px;line-height:12px;font-size:8.4px;color:#102010">Start</div>
<div style="position:absolute;left:0;top:729px;width:1385px;height:1px;background:#d0d0d0"></div>
<div style="position:absolute;left:0;top:730px;width:1385px;height:17px;background:#f0f0f0"></div>
<div class="t8" style="left:1.7px;top:733.5px;line-height:11px;font-size:8px;color:#202020">For Help, press F1</div>
<div style="position:absolute;left:886px;top:732px;width:1px;height:14px;background:#c8c8c8"></div>
<div style="position:absolute;left:977px;top:732px;width:1px;height:14px;background:#c8c8c8"></div>
<div style="position:absolute;left:1049px;top:732px;width:1px;height:14px;background:#c8c8c8"></div>
<div style="position:absolute;left:1099px;top:732px;width:1px;height:14px;background:#c8c8c8"></div>
<div style="position:absolute;left:1149px;top:732px;width:1px;height:14px;background:#c8c8c8"></div>
<div style="position:absolute;left:1199px;top:732px;width:1px;height:14px;background:#c8c8c8"></div>
<div style="position:absolute;left:1250px;top:732px;width:1px;height:14px;background:#c8c8c8"></div>
<div style="position:absolute;left:1297px;top:732px;width:1px;height:14px;background:#c8c8c8"></div>
<div class="t8" style="left:889.7px;top:733.5px;line-height:11px;font-size:8px;color:#202020">Default</div>
<svg style="position:absolute;left:1301px;top:736px" width="8" height="8" viewBox="0 0 8 8"><path d="M1 7V5.5M3 7V4.5M5 7V3M7 7V1.5" stroke="#40b040" stroke-width="1.1"/></svg>
<div class="t8" style="left:1316.5px;top:733.5px;line-height:11px;font-size:8px;color:#202020">228.47 ms</div>
<div style="position:absolute;left:0;top:747px;width:1385px;height:1px;background:#505050"></div>
<div style="position:absolute;left:1383px;top:73px;width:2px;height:675px;background:#e8e8e8"></div>
<div style="position:absolute;left:199.3px;top:189px;width:560.7px;height:281px;box-shadow:1px 2px 6px rgba(0,0,0,0.35);background:#f0f0f0;border:1px solid #9a9a9a;box-sizing:border-box"></div>
<div style="position:absolute;left:201px;top:190px;width:558px;height:21px;background:#fff"></div>
<div class="t8" style="left:205.7px;top:195px;line-height:12px;font-size:8.5px;color:#202020">Order</div>
<svg style="position:absolute;left:672px;top:195px" width="10" height="10" viewBox="0 0 10 10"><path d="M0.5 5H9.5" stroke="#404040" stroke-width="1"/></svg>
<svg style="position:absolute;left:705px;top:196px" width="9" height="9" viewBox="0 0 9 9"><rect x="0.5" y="0.5" width="7.5" height="7" fill="none" stroke="#c8c8c8" stroke-width="0.9"/></svg>
<svg style="position:absolute;left:738px;top:195px" width="10" height="10" viewBox="0 0 10 10"><path d="M1 1L9 9M9 1L1 9" stroke="#303030" stroke-width="1"/></svg>
<div style="position:absolute;left:206px;top:218px;width:221px;height:239.5px;background:#fff;border-top:1.5px solid #a0a0a0;border-left:1px solid #c8c8c8;border-right:1px solid #e8e8e8;box-sizing:border-box"></div>
<div style="position:absolute;left:207.5px;top:220.5px;width:186.5px;height:222.5px;border:1px solid #303030;box-sizing:border-box"></div>
<svg style="position:absolute;left:0;top:0" width="1385" height="748" viewBox="0 0 1385 748"><path d="M232.5 222V441M256.5 222V441M279.5 222V441M302.5 222V441M325.5 222V441M348.5 222V441M371.5 222V441M209 249.5H393M209 276.5H393M209 304.5H393M209 332.5H393M209 359.5H393M209 387.5H393M209 415.5H393" stroke="#d8d8d8" stroke-width="1" stroke-dasharray="1.5 2.5" fill="none"/><polyline points="208.9,375.9 214.1,375.9 214.8,390.3 215.6,403.5 217.0,402.1 219.2,378.5 220.0,369.0 220.7,359.4 223.6,359.4 224.4,354.3 228.8,354.3 229.5,375.6 236.1,375.6 236.9,359.4 238.4,369.7 239.8,375.6 243.5,365.3 245.0,366.8 247.2,372.6 249.4,355.0 250.1,343.2 253.1,342.5 253.8,330.0 254.5,305.0 257.5,321.2 258.9,321.9 260.4,325.6 260.4,348.4 265.6,348.4 266.3,357.9 267.8,347.6 270.7,338.8 271.4,326.3 280.3,326.3 280.3,338.8 281.0,344.7 282.5,334.4 283.6,309.4 291.3,309.4 292.8,305.0 295.7,298.4 300.1,298.4 302.3,255.7 304.5,265.3 306.7,265.3 308.9,298.4 317.0,298.4 320.7,249.1 330.3,249.1 331.0,238.1 332.5,238.1 333.9,248.4 343.5,249.1 345.0,260.9 345.7,255.0 347.2,276.3 350.1,260.9 353.1,254.3 361.1,254.3 362.6,276.3 394.2,276.3" fill="none" stroke="#f07878" stroke-width="1"/><polyline points="208.9,387.1 214.1,387.1 214.8,403.5 216.0,419.7 217.5,409.4 218.5,414.6 219.2,393.2 220.7,376.3 223.6,375.6 224.8,365.3 226.6,370.4 228.8,365.3 229.5,392.5 236.1,392.5 236.9,371.2 238.6,387.4 240.6,381.5 243.5,374.1 244.5,376.3 245.4,381.5 247.9,381.5 248.6,360.9 250.1,354.3 253.8,354.3 254.5,325.6 256.0,341.8 258.2,332.9 260.4,365.3 264.8,360.9 266.3,370.4 267.8,360.9 270.7,359.4 271.4,332.9 279.5,332.2 281.0,353.5 282.5,338.8 283.9,321.2 286.1,321.9 287.6,321.9 289.8,326.3 291.3,326.3 292.0,312.4 294.2,309.4 296.4,304.3 299.4,304.3 302.3,259.4 303.8,265.3 306.7,291.8 307.5,305.0 309.7,315.3 314.1,315.3 317.8,303.5 320.0,260.9 322.9,255.0 327.3,265.3 330.3,244.0 332.5,244.7 334.7,265.3 343.5,265.3 345.0,275.6 347.2,288.1 348.6,287.4 350.1,269.7 353.1,265.3 361.1,265.3 362.6,288.1 394.2,288.1" fill="none" stroke="#2a6ae0" stroke-width="1"/><path d="M394 249.5H396" stroke="#303030" stroke-width="1"/><path d="M394 304.5H396" stroke="#303030" stroke-width="1"/><path d="M394 332.5H396" stroke="#303030" stroke-width="1"/><path d="M394 359.5H396" stroke="#303030" stroke-width="1"/><path d="M394 387.5H396" stroke="#303030" stroke-width="1"/><path d="M394 415.5H396" stroke="#303030" stroke-width="1"/><path d="M209.5 443V445" stroke="#303030" stroke-width="1"/><path d="M256.5 443V445" stroke="#303030" stroke-width="1"/><path d="M279.5 443V445" stroke="#303030" stroke-width="1"/><path d="M302.5 443V445" stroke="#303030" stroke-width="1"/><path d="M325.5 443V445" stroke="#303030" stroke-width="1"/><path d="M348.5 443V445" stroke="#303030" stroke-width="1"/><path d="M371.5 443V445" stroke="#303030" stroke-width="1"/></svg>
<div class="t8" style="left:210.5px;top:222px;line-height:10px;font-size:7px;color:#303030">USDJPY</div>
<div class="t8" style="left:397px;top:244.0px;line-height:10px;font-size:6.9px;color:#303030">133.305</div>
<div class="t8" style="left:397px;top:299.0px;line-height:10px;font-size:6.9px;color:#303030">133.295</div>
<div class="t8" style="left:397px;top:327.0px;line-height:10px;font-size:6.9px;color:#303030">133.290</div>
<div class="t8" style="left:397px;top:354.4px;line-height:10px;font-size:6.9px;color:#303030">133.285</div>
<div class="t8" style="left:397px;top:382.4px;line-height:10px;font-size:6.9px;color:#303030">133.280</div>
<div class="t8" style="left:397px;top:410.3px;line-height:10px;font-size:6.9px;color:#303030">133.275</div>
<div style="position:absolute;left:394.5px;top:272.5px;width:29px;height:8px;background:#f06060"></div>
<div class="t8" style="left:396.5px;top:271.5px;line-height:10px;font-size:6.9px;color:#fff">133.300</div>
<div style="position:absolute;left:394.5px;top:284.3px;width:29px;height:8px;background:#1a6ee0"></div>
<div class="t8" style="left:396.5px;top:283.3px;line-height:10px;font-size:6.9px;color:#fff">133.298</div>
<div class="t8" style="left:209.5px;top:444.7px;line-height:10px;font-size:6.6px;color:#303030">2022.08.05</div>
<div class="t8" style="left:255.1px;top:444.7px;line-height:10px;font-size:6.6px;color:#303030">09:32</div>
<div class="t8" style="left:278.3px;top:444.7px;line-height:10px;font-size:6.6px;color:#303030">09:32</div>
<div class="t8" style="left:301.7px;top:444.7px;line-height:10px;font-size:6.6px;color:#303030">09:33</div>
<div class="t8" style="left:324.5px;top:444.7px;line-height:10px;font-size:6.6px;color:#303030">09:33</div>
<div class="t8" style="left:347.7px;top:444.7px;line-height:10px;font-size:6.6px;color:#303030">09:33</div>
<div class="t8" style="left:371.2px;top:444.7px;line-height:10px;font-size:6.6px;color:#303030">09:33:50</div>
<div class="t8 r" style="right:882.2px;top:220.1px;line-height:11px;font-size:7.4px;color:#202020">Symbol:</div>
<div class="t8 r" style="right:882.2px;top:241.5px;line-height:11px;font-size:7.4px;color:#202020">Type:</div>
<div class="t8 r" style="right:882.2px;top:275.5px;line-height:11px;font-size:7.4px;color:#202020">Type:</div>
<div class="t8 r" style="right:882.2px;top:295.1px;line-height:11px;font-size:7.4px;color:#202020">Volume:</div>
<div class="t8 r" style="right:882.2px;top:315.6px;line-height:11px;font-size:7.4px;color:#202020">Price:</div>
<div class="t8 r" style="right:882.2px;top:334.5px;line-height:11px;font-size:7.4px;color:#202020">Stop Loss:</div>
<div class="t8 r" style="right:882.2px;top:355.1px;line-height:11px;font-size:7.4px;color:#202020">Expiration:</div>
<div class="t8 r" style="right:882.2px;top:374.9px;line-height:11px;font-size:7.4px;color:#202020">Comment:</div>
<div class="t8 r" style="right:720.2px;top:315.6px;line-height:11px;font-size:7.4px;color:#202020">Stop Limit price:</div>
<div class="t8 r" style="right:720.2px;top:334.5px;line-height:11px;font-size:7.4px;color:#202020">Take Profit:</div>
<div class="t8 r" style="right:720.2px;top:355.1px;line-height:11px;font-size:7.4px;color:#202020">Expiration date:</div>
<div style="position:absolute;left:508.5px;top:218.4px;width:233.10000000000002px;height:15.0px;background:#fff;border:1px solid #b4b4b4;box-sizing:border-box"></div>
<div class="t8" style="left:510.6px;top:220.4px;line-height:11px;font-size:7.4px;color:#202020">USDJPY, US Dollar vs Japanese Yen</div>
<svg style="position:absolute;left:731px;top:223px" width="8" height="6" viewBox="0 0 8 6"><path d="M1 1.5L4 4.5L7 1.5" stroke="#404040" stroke-width="0.9" fill="none"/></svg>
<div style="position:absolute;left:508.5px;top:239.4px;width:233.10000000000002px;height:15.299999999999983px;background:#e2e2e2;border:1px solid #b8b8b8;box-sizing:border-box"></div>
<div class="t8" style="left:510.6px;top:241.6px;line-height:11px;font-size:7.4px;color:#202020">Pending Order</div>
<svg style="position:absolute;left:731px;top:244px" width="8" height="6" viewBox="0 0 8 6"><path d="M1 1.5L4 4.5L7 1.5" stroke="#404040" stroke-width="0.9" fill="none"/></svg>
<div style="position:absolute;left:508.5px;top:293px;width:58.5px;height:15px;background:#fff;border:1px solid #b4b4b4;box-sizing:border-box"></div>
<div style="position:absolute;left:508.5px;top:313.5px;width:58.5px;height:14.0px;background:#fff;border:1px solid #b4b4b4;box-sizing:border-box"></div>
<div style="position:absolute;left:508.5px;top:333px;width:58.5px;height:14.5px;background:#fff;border:1px solid #b4b4b4;box-sizing:border-box"></div>
<div style="position:absolute;left:508.5px;top:273.2px;width:70.29999999999995px;height:14.800000000000011px;background:#cce4f7;border:1px solid #3c7fb1;box-sizing:border-box"></div>
<div class="t8" style="left:510.6px;top:275.5px;line-height:11px;font-size:7.4px;color:#202020">Buy Limit</div>
<svg style="position:absolute;left:567.5px;top:278px" width="8" height="6" viewBox="0 0 8 6"><path d="M1 1.5L4 4.5L7 1.5" stroke="#303030" stroke-width="0.9" fill="none"/></svg>
<div style="position:absolute;left:508.5px;top:353.8px;width:70.29999999999995px;height:13.800000000000011px;background:#e2e2e2;border:1px solid #c0c0c0;box-sizing:border-box"></div>
<div class="t8" style="left:510.6px;top:355.4px;line-height:11px;font-size:7.4px;color:#202020">GTC</div>
<svg style="position:absolute;left:567.5px;top:358px" width="8" height="6" viewBox="0 0 8 6"><path d="M1 1.5L4 4.5L7 1.5" stroke="#404040" stroke-width="0.9" fill="none"/></svg>
<div style="position:absolute;left:508.5px;top:373.1px;width:233.10000000000002px;height:13.299999999999955px;background:#fff;border:1px solid #b4b4b4;box-sizing:border-box"></div>
<div style="position:absolute;left:671.2px;top:313.9px;width:58.0px;height:13.300000000000011px;background:#f0f0f0;border:1px solid #d0d0d0;box-sizing:border-box"></div>
<div class="t8 r" style="right:659.0px;top:315.2px;line-height:11px;font-size:7.4px;color:#a8a8a8">0.000</div>
<div style="position:absolute;left:730.4px;top:313.9px;width:10.0px;height:13.300000000000011px;background:#f0f0f0;border:1px solid #d8d8d8;box-sizing:border-box"></div>
<svg style="position:absolute;left:731px;top:314px" width="9" height="13" viewBox="0 0 9 13"><path d="M2.5 4.5L4.5 2.5L6.5 4.5Z" fill="#a0a0a0"/><path d="M2.5 8.5L4.5 10.5L6.5 8.5Z" fill="#a0a0a0"/></svg>
<div style="position:absolute;left:671.2px;top:333.2px;width:58.0px;height:13.800000000000011px;background:#fff;border:1px solid #404040;box-sizing:border-box"></div>
<div class="t8 r" style="right:659.0px;top:334.8px;line-height:11px;font-size:7.4px;color:#202020">0.000</div>
<div style="position:absolute;left:730.4px;top:333.2px;width:10.0px;height:13.800000000000011px;background:#f0f0f0;border:1px solid #b0b0b0;box-sizing:border-box"></div>
<svg style="position:absolute;left:731px;top:333.5px" width="9" height="13" viewBox="0 0 9 13"><path d="M2.5 4.5L4.5 2.5L6.5 4.5Z" fill="#202020"/><path d="M2.5 8.5L4.5 10.5L6.5 8.5Z" fill="#202020"/></svg>
<div style="position:absolute;left:671.2px;top:353.8px;width:70.39999999999998px;height:13.800000000000011px;background:#f0f0f0;border:1px solid #d0d0d0;box-sizing:border-box"></div>
<div class="t8" style="left:672.5px;top:355.4px;line-height:11px;font-size:7.4px;color:#a8a8a8">05.08.22 14:32</div>
<svg style="position:absolute;left:731px;top:358px" width="8" height="6" viewBox="0 0 8 6"><path d="M1 1.5L4 4.5L7 1.5" stroke="#c0c0c0" stroke-width="0.9" fill="none"/></svg>
<div class="t8" style="left:515px;top:398.5px;line-height:24px;font-size:19.2px;-webkit-text-stroke:0.05px currentColor;color:#1a1a1a">133.29<span style="font-size:14px">8</span> / 133.30<span style="font-size:14px">0</span></div>
<div style="position:absolute;left:444.5px;top:433.4px;width:296.29999999999995px;height:15.0px;background:#f0f0f0;border:1px solid #c0c0c0;box-sizing:border-box"></div>
<div class="t8" style="left:444.5px;width:296px;text-align:center;top:435px;line-height:12px;font-size:7.4px;color:#8a8a8a">Place</div>
<div style="position:absolute;left:509px;top:288px;width:70px;height:57.5px;background:#fff;border:1px solid #646464;box-sizing:border-box;box-shadow:2px 2px 2px rgba(0,0,0,0.25)"></div>
<div style="position:absolute;left:510px;top:288.5px;width:68px;height:9.6px;background:#0078d7"></div>
<div class="t8" style="left:510.5px;top:287.9px;line-height:11px;font-size:7.5px;color:#fff">Buy Limit</div>
<div class="t8" style="left:510.5px;top:297.4px;line-height:11px;font-size:7.5px;color:#202020">Sell Limit</div>
<div class="t8" style="left:510.5px;top:307.0px;line-height:11px;font-size:7.5px;color:#202020">Buy Stop</div>
<div class="t8" style="left:510.5px;top:316.5px;line-height:11px;font-size:7.5px;color:#202020">Sell Stop</div>
<div class="t8" style="left:510.5px;top:326.1px;line-height:11px;font-size:7.5px;color:#202020">Buy Stop Limit</div>
<div class="t8" style="left:510.5px;top:335.6px;line-height:11px;font-size:7.5px;color:#202020">Sell Stop Limit</div>
</body></html>
